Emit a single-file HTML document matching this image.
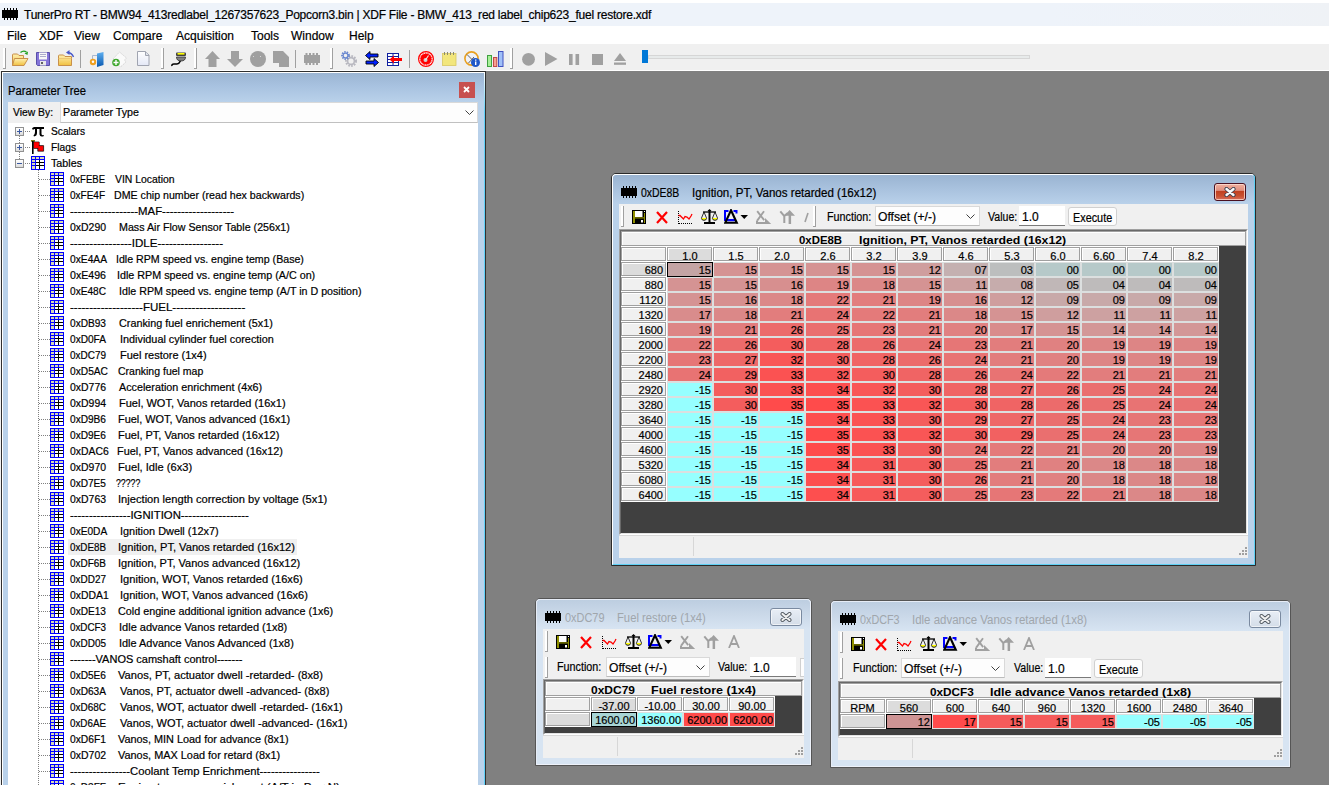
<!DOCTYPE html><html><head><meta charset="utf-8"><style>
html,body{margin:0;padding:0;}
body{width:1329px;height:785px;overflow:hidden;position:relative;background:#808080;font-family:"Liberation Sans",sans-serif;}
div{box-sizing:border-box;}
.t{position:absolute;white-space:pre;line-height:14px;font-family:"Liberation Sans",sans-serif;-webkit-text-stroke:0.2px currentColor;}
svg{display:block;}
</style></head><body><div style="position:absolute;left:0px;top:0px;width:1329px;height:3px;background:#fff"></div><div style="position:absolute;left:0px;top:3px;width:1329px;height:23px;background:linear-gradient(90deg,#eef3fa 0px,#eef3fa 1050px,#eff2f6 1329px)"></div><svg style="position:absolute;left:2px;top:8px;shape-rendering:crispEdges" width="16" height="12" viewBox="0 0 16 12"><rect x="0" y="2" width="16" height="8" fill="#000"/><rect x="1.5" y="0" width="1.6" height="2" fill="#000"/><rect x="1.5" y="10" width="1.6" height="2" fill="#000"/><rect x="4.5" y="0" width="1.6" height="2" fill="#000"/><rect x="4.5" y="10" width="1.6" height="2" fill="#000"/><rect x="7.5" y="0" width="1.6" height="2" fill="#000"/><rect x="7.5" y="10" width="1.6" height="2" fill="#000"/><rect x="10.5" y="0" width="1.6" height="2" fill="#000"/><rect x="10.5" y="10" width="1.6" height="2" fill="#000"/><rect x="13.5" y="0" width="1.6" height="2" fill="#000"/><rect x="13.5" y="10" width="1.6" height="2" fill="#000"/></svg><div class="t" style="left:24px;top:7px;font-size:12px;color:#000;font-weight:400;line-height:16px;letter-spacing:-0.23px;">TunerPro RT - BMW94_413redlabel_1267357623_Popcorn3.bin | XDF File - BMW_413_red label_chip623_fuel restore.xdf</div><div style="position:absolute;left:0px;top:26px;width:1329px;height:18px;background:#fff"></div><div class="t" style="left:7px;top:29px;font-size:12px;color:#000;font-weight:400;line-height:14px;">File</div><div class="t" style="left:39px;top:29px;font-size:12px;color:#000;font-weight:400;line-height:14px;">XDF</div><div class="t" style="left:74px;top:29px;font-size:12px;color:#000;font-weight:400;line-height:14px;">View</div><div class="t" style="left:113px;top:29px;font-size:12px;color:#000;font-weight:400;line-height:14px;">Compare</div><div class="t" style="left:176px;top:29px;font-size:12px;color:#000;font-weight:400;line-height:14px;">Acquisition</div><div class="t" style="left:251px;top:29px;font-size:12px;color:#000;font-weight:400;line-height:14px;">Tools</div><div class="t" style="left:291px;top:29px;font-size:12px;color:#000;font-weight:400;line-height:14px;">Window</div><div class="t" style="left:349px;top:29px;font-size:12px;color:#000;font-weight:400;line-height:14px;">Help</div><div style="position:absolute;left:0px;top:44px;width:1329px;height:26px;background:#f0f0f0"></div><div style="position:absolute;left:0px;top:70px;width:1329px;height:1px;background:#fff"></div><div style="position:absolute;left:3px;top:48px;width:2px;height:20px;background:#fff"></div><div style="position:absolute;left:5px;top:48px;width:1px;height:20px;background:#a0a0a0"></div><div style="position:absolute;left:3px;top:68px;width:3px;height:1px;background:#a0a0a0"></div><div style="position:absolute;left:80px;top:50px;width:1px;height:18px;background:#a0a0a0"></div><div style="position:absolute;left:161px;top:48px;width:2px;height:20px;background:#fff"></div><div style="position:absolute;left:163px;top:48px;width:1px;height:20px;background:#a0a0a0"></div><div style="position:absolute;left:161px;top:68px;width:3px;height:1px;background:#a0a0a0"></div><div style="position:absolute;left:194px;top:48px;width:2px;height:20px;background:#fff"></div><div style="position:absolute;left:196px;top:48px;width:1px;height:20px;background:#a0a0a0"></div><div style="position:absolute;left:194px;top:68px;width:3px;height:1px;background:#a0a0a0"></div><div style="position:absolute;left:295px;top:50px;width:1px;height:18px;background:#a0a0a0"></div><div style="position:absolute;left:330px;top:48px;width:2px;height:20px;background:#fff"></div><div style="position:absolute;left:332px;top:48px;width:1px;height:20px;background:#a0a0a0"></div><div style="position:absolute;left:330px;top:68px;width:3px;height:1px;background:#a0a0a0"></div><div style="position:absolute;left:409px;top:50px;width:1px;height:18px;background:#a0a0a0"></div><div style="position:absolute;left:510px;top:48px;width:2px;height:20px;background:#fff"></div><div style="position:absolute;left:512px;top:48px;width:1px;height:20px;background:#a0a0a0"></div><div style="position:absolute;left:510px;top:68px;width:3px;height:1px;background:#a0a0a0"></div><svg style="position:absolute;left:0;top:44px" width="660" height="27" viewBox="0 44 660 27">
<defs>
<linearGradient id="gfold" x1="0" y1="0" x2="0" y2="1"><stop offset="0" stop-color="#fff0b0"/><stop offset="1" stop-color="#f0c040"/></linearGradient>
<linearGradient id="gdoor" x1="0" y1="0" x2="0" y2="1"><stop offset="0" stop-color="#60b0f0"/><stop offset="1" stop-color="#0858b0"/></linearGradient>
<linearGradient id="gpage" x1="0" y1="0" x2="0" y2="1"><stop offset="0" stop-color="#fff"/><stop offset="1" stop-color="#e4e8f6"/></linearGradient>
</defs>
<!-- open folder w/ green arrow -->
<path d="M12.5 65.5 V55 Q12.5 54 13.5 54 H17.5 L19 55.5 H23.5 V58" fill="url(#gfold)" stroke="#c8904a"/>
<path d="M14.5 58.5 H28 L24 65.5 H12.5z" fill="url(#gfold)" stroke="#c8904a"/>
<path d="M20.5 52.5 Q23.5 50 26.5 52" fill="none" stroke="#20a020" stroke-width="1.4"/>
<path d="M24.5 53.5 L28 51.5 L27.5 55z" fill="#20a020"/>
<!-- floppy purple -->
<path d="M36.5 52.5 H49.5 V65.5 H37.5 L36.5 64.5z" fill="#8474d8" stroke="#5850a8"/>
<rect x="39" y="52.5" width="8" height="7" fill="#f8f8f8"/>
<path d="M40 54.5h6M40 56.5h6" stroke="#9898c0" stroke-width="0.8"/>
<rect x="40" y="61" width="6" height="4.5" fill="#e8e8e8"/>
<rect x="41" y="62" width="2" height="2" fill="#606060"/>
<!-- folder w/ blue arrow -->
<path d="M58.5 65.5 V56 Q58.5 55 59.5 55 H63.5 L65 56.5 H71.5 V65.5z" fill="url(#gfold)" stroke="#c8904a"/>
<path d="M58.5 58.5 H71.5" stroke="#e8c070" stroke-width="0.8"/>
<path d="M73.5 57 Q72 53 68 52.5" fill="none" stroke="#4858c8" stroke-width="1.4"/>
<path d="M66 52.5 L69.5 50 L69.5 55z" fill="#4858c8"/>
<!-- door -->
<path d="M97 53.5 L103.5 52 V65 L97 67z" fill="url(#gdoor)"/>
<path d="M92.5 62 V55.5 H97" fill="none" stroke="#a8b8d0" stroke-width="1"/>
<circle cx="93" cy="62" r="3.2" fill="#f0a020"/>
<circle cx="93" cy="61.7" r="1.2" fill="#fff"/>
<!-- plug-ish -->
<path d="M119.5 52 L126.5 58 L124.5 60 L126 62 L120.5 67 L113 59z" fill="#fafafa" stroke="#c8c8c8" stroke-width="0.8" stroke-dasharray="1.5 1"/>
<circle cx="116" cy="62.5" r="3.8" fill="#40a830"/>
<path d="M113.5 62.5h5M116 60v5" stroke="#fff" stroke-width="1.4"/>
<!-- page -->
<path d="M137.5 51.5 H145.5 L149 55 V65.5 H137.5z" fill="url(#gpage)" stroke="#a0a4b0"/>
<path d="M145.5 51.5 V55.5 H149" fill="#e0e4ec" stroke="#a0a4b0"/>
<!-- connection plug -->
<path d="M172 66 Q171.5 64 174 64 H177 Q179 64 180 61.5 L181 59" fill="none" stroke="#000" stroke-width="1.6"/>
<path d="M176.5 57 Q176.5 61 181 61 Q185.5 61 185.5 57z" fill="#808080" stroke="#303030" stroke-width="0.8"/>
<rect x="176" y="52.5" width="10" height="3.5" rx="1" fill="#404040"/>
<rect x="177.5" y="53" width="7" height="1.6" fill="#ffff00"/>
<!-- grey up/down/circle/pages -->
<path d="M212.5 51 L220 59 H216.5 V67 H208.5 V59 H205z" fill="#a0a0a0"/>
<path d="M235 67 L243 59 H239 V51 H231 V59 H227z" fill="#a0a0a0"/>
<circle cx="258" cy="59" r="8" fill="#a0a0a0"/>
<rect x="253" y="56" width="1" height="1" fill="#d8d8d8"/><rect x="260" y="56" width="1" height="1" fill="#d8d8d8"/>
<path d="M273 51 H283 L289 57 V67 H279 V63 H273z" fill="#a0a0a0"/>
<!-- grey chip -->
<rect x="304" y="55" width="16" height="8" fill="#a0a0a0"/>
<g fill="#a0a0a0"><rect x="305.5" y="53" width="2" height="2"/><rect x="309" y="53" width="2" height="2"/><rect x="312.5" y="53" width="2" height="2"/><rect x="316" y="53" width="2" height="2"/><rect x="305.5" y="63" width="2" height="2"/><rect x="309" y="63" width="2" height="2"/><rect x="312.5" y="63" width="2" height="2"/><rect x="316" y="63" width="2" height="2"/></g>
<!-- gears -->
<circle cx="351" cy="61" r="4.8" fill="none" stroke="#b8b8c0" stroke-width="2.4" stroke-dasharray="1.6 1.2"/>
<circle cx="351" cy="61" r="3.4" fill="none" stroke="#b8b8c0" stroke-width="1.6"/>
<circle cx="345.5" cy="55.5" r="3.4" fill="none" stroke="#6a88d0" stroke-width="2" stroke-dasharray="1.4 1"/>
<circle cx="345.5" cy="55.5" r="2.4" fill="none" stroke="#6a88d0" stroke-width="1.2"/>
<!-- arrows -->
<path d="M365.5 55.5 L370 51.5 V54 H378 V57 H370 V59.5z" fill="#0020ff" stroke="#000" stroke-width="0.9"/>
<path d="M378.5 62.5 L374 58.5 V61 H366 V64 H374 V66.5z" fill="#0020ff" stroke="#000" stroke-width="0.9"/>
<!-- table w/ red arrow -->
<rect x="387.5" y="53.5" width="11" height="12" fill="#fff" stroke="#1020a0"/>
<path d="M393 53.5 V65.5 M387.5 56.5 H398.5 M387.5 59.5 H398.5 M387.5 62.5 H398.5" stroke="#1020a0" stroke-width="1"/>
<path d="M389.5 59.5 L394 55.5 V58 H402 V61 H394 V63.5z" fill="#ff0000"/>
<!-- red gauge -->
<circle cx="426" cy="59" r="7.4" fill="#fff" stroke="#ff0000" stroke-width="1.2"/>
<circle cx="426" cy="59" r="5.6" fill="#ff0000"/>
<circle cx="426" cy="59" r="5.9" fill="none" stroke="#ff0000" stroke-width="1" stroke-dasharray="1.2 1.4"/>
<circle cx="425.5" cy="60" r="2" fill="#d0d0d0"/>
<path d="M425.5 60 L428.5 55.5" stroke="#f0f0f0" stroke-width="1.1"/>
<!-- notepad -->
<rect x="442.5" y="53.5" width="13.5" height="12" fill="#f2e67c" stroke="#d8c860" stroke-width="0.8"/>
<g fill="#8a8a70"><rect x="444" y="52" width="1" height="3"/><rect x="447" y="52" width="1" height="3"/><rect x="450" y="52" width="1" height="3"/><rect x="453" y="52" width="1" height="3"/></g>
<!-- clock w/ info -->
<circle cx="471.5" cy="58.5" r="6.6" fill="#f0f2f8" stroke="#e8a020" stroke-width="1.6"/>
<path d="M467 54.5 L472 59.5 M474 57 L468.5 63" stroke="#505050" stroke-width="0.9"/>
<circle cx="475.5" cy="62.5" r="4.5" fill="#2058c8"/>
<rect x="475" y="61.5" width="1.4" height="3.5" fill="#fff"/><rect x="475" y="59.5" width="1.4" height="1.2" fill="#fff"/>
<!-- bars -->
<rect x="487.5" y="55.5" width="4" height="11" fill="#a8f098" stroke="#40a040"/>
<rect x="493.5" y="57.5" width="3.3" height="9" fill="#f8a090" stroke="#c04848"/>
<rect x="498.5" y="51.5" width="4.5" height="15" fill="#a0c0f8" stroke="#4050c0"/>
<!-- media -->
<circle cx="528.5" cy="59.3" r="6.4" fill="#a0a0a0"/>
<path d="M545 52 L557.5 59 L545 66z" fill="#a0a0a0"/>
<rect x="569" y="54" width="3.6" height="11" fill="#a0a0a0"/><rect x="575.5" y="54" width="3.6" height="11" fill="#a0a0a0"/>
<rect x="592" y="54" width="11" height="11" fill="#a0a0a0"/>
<path d="M620 53 L626 61 H614z" fill="#a0a0a0"/><rect x="614" y="62.5" width="12" height="2.3" fill="#a0a0a0"/>
</svg><div style="position:absolute;left:648px;top:55px;width:382px;height:4px;background:#e7eaea;border:1px solid #d6d6d6"></div><div style="position:absolute;left:642px;top:50px;width:6px;height:13px;background:#0078d7"></div><div style="position:absolute;left:486px;top:71px;width:843px;height:714px;background:#808080"></div><div style="position:absolute;left:0px;top:71px;width:1px;height:714px;background:#f0f0f0"></div><div style="position:absolute;left:1px;top:71px;width:485px;height:714px;background:#303030"></div><div style="position:absolute;left:2px;top:72px;width:483px;height:713px;background:linear-gradient(#9ab4d2 0px,#a8c2e0 14px,#b9d1ea 30px,#b9d1ea 100%)"></div><div style="position:absolute;left:2px;top:72px;width:482px;height:1px;background:#fff"></div><div style="position:absolute;left:2px;top:72px;width:1px;height:713px;background:#fff"></div><div style="position:absolute;left:484px;top:72px;width:1px;height:713px;background:linear-gradient(#fff 0px,#60d0f8 40px,#60d0f8 100%)"></div><div class="t" style="left:8px;top:84px;font-size:12px;color:#000;font-weight:400;;transform-origin:0 0;transform:scaleX(0.9355);">Parameter Tree</div><div style="position:absolute;left:459px;top:82px;width:16px;height:16px;background:#c75050"></div><svg style="position:absolute;left:463px;top:86px;" width="7" height="7" viewBox="0 0 7 7"><path d="M1 1l5 5M6 1l-5 5" stroke="#fff" stroke-width="1.8"/></svg><div style="position:absolute;left:8px;top:102px;width:52px;height:21px;background:#f0f0f0"></div><div class="t" style="left:13px;top:105px;font-size:11px;color:#000;font-weight:400;;transform-origin:0 0;transform:scaleX(0.9391);">View By:</div><div style="position:absolute;left:60px;top:102px;width:418px;height:21px;background:#fdfdfd;border:1px solid #d9d9d9;border-bottom-color:#c0c0c0"></div><div class="t" style="left:62.5px;top:105px;font-size:11px;color:#000;font-weight:400;;transform-origin:0 0;transform:scaleX(0.9736);">Parameter Type</div><svg style="position:absolute;left:465px;top:110px;" width="9" height="6" viewBox="0 0 9 6"><path d="M0.5 0.5l4 4 4-4" fill="none" stroke="#404040" stroke-width="1"/></svg><div style="position:absolute;left:8px;top:123px;width:470px;height:662px;background:#fff"></div><div style="position:absolute;left:19px;top:136px;width:1px;height:24px;background-image:linear-gradient(#808080 50%,transparent 50%);background-size:1px 2px"></div><div style="position:absolute;left:15px;top:127px;width:9px;height:9px;background:linear-gradient(#fff,#dcdcdc);border:1px solid #919191"></div><div style="position:absolute;left:17px;top:131px;width:5px;height:1px;background:#3a58a0"></div><div style="position:absolute;left:19px;top:129px;width:1px;height:5px;background:#3a58a0"></div><div style="position:absolute;left:25px;top:131px;width:6px;height:1px;background-image:linear-gradient(90deg,#808080 50%,transparent 50%);background-size:2px 1px"></div><div class="t" style="left:50.5px;top:124px;font-size:11px;color:#000;font-weight:400;;transform-origin:0 0;transform:scaleX(0.9267);">Scalars</div><div style="position:absolute;left:15px;top:143px;width:9px;height:9px;background:linear-gradient(#fff,#dcdcdc);border:1px solid #919191"></div><div style="position:absolute;left:17px;top:147px;width:5px;height:1px;background:#3a58a0"></div><div style="position:absolute;left:19px;top:145px;width:1px;height:5px;background:#3a58a0"></div><div style="position:absolute;left:25px;top:147px;width:6px;height:1px;background-image:linear-gradient(90deg,#808080 50%,transparent 50%);background-size:2px 1px"></div><div class="t" style="left:50.5px;top:140px;font-size:11px;color:#000;font-weight:400;;transform-origin:0 0;transform:scaleX(0.9292);">Flags</div><div style="position:absolute;left:15px;top:159px;width:9px;height:9px;background:linear-gradient(#fff,#dcdcdc);border:1px solid #919191"></div><div style="position:absolute;left:17px;top:163px;width:5px;height:1px;background:#3a58a0"></div><div style="position:absolute;left:25px;top:163px;width:6px;height:1px;background-image:linear-gradient(90deg,#808080 50%,transparent 50%);background-size:2px 1px"></div><div class="t" style="left:50.5px;top:156px;font-size:11px;color:#000;font-weight:400;;transform-origin:0 0;transform:scaleX(0.9749);">Tables</div><svg style="position:absolute;left:31px;top:126px;" width="14" height="11" viewBox="0 0 14 11"><path d="M1 2.5 Q2 0.5 4 1 H13 V3 H10.5 V8 Q10.5 9.5 12.5 9 L13 10 Q9 11.5 8.5 8.5 V3 H6 V7 Q6 10 3 10.5 L2.5 9.5 Q4 8 4 6 V3 Q2.5 3 2 4z" fill="#000"/></svg><svg style="position:absolute;left:31px;top:139px;" width="14" height="15" viewBox="0 0 14 15"><rect x="0" y="1" width="4" height="1.8" fill="#808020"/><rect x="1" y="2" width="1.6" height="13" fill="#000"/><path d="M2.6 3H8.2V9.4H2.6z" fill="#ff0000" stroke="#000" stroke-width="0.7"/><path d="M6.8 6.6H12.6V12.2H6.8z" fill="#ff0000" stroke="#000" stroke-width="0.7"/><path d="M3 3.4H7.8V9H3z" fill="#ff0000"/></svg><svg style="position:absolute;left:31px;top:156px;shape-rendering:crispEdges" width="14" height="14" viewBox="0 0 14 14"><rect x="0" y="0" width="14" height="14" fill="#0000ff"/><rect x="1" y="1" width="3" height="2" fill="#d8d8b8"/><rect x="5" y="1" width="3" height="2" fill="#d8d8b8"/><rect x="9" y="1" width="4" height="2" fill="#d8d8b8"/><rect x="1" y="4" width="3" height="2" fill="#d8d8b8"/><rect x="1" y="7" width="3" height="2" fill="#d8d8b8"/><rect x="1" y="10" width="3" height="3" fill="#d8d8b8"/><rect x="5" y="4" width="8" height="9" fill="#fff"/><rect x="8" y="4" width="1" height="9" fill="#000"/><rect x="5" y="6" width="8" height="1" fill="#000"/><rect x="5" y="9" width="8" height="1" fill="#000"/></svg><div style="position:absolute;left:38px;top:170px;width:1px;height:615px;background-image:linear-gradient(#808080 50%,transparent 50%);background-size:1px 2px"></div><div style="position:absolute;left:39px;top:179px;width:11px;height:1px;background-image:linear-gradient(90deg,#808080 50%,transparent 50%);background-size:2px 1px"></div><svg style="position:absolute;left:50px;top:172px;shape-rendering:crispEdges" width="14" height="14" viewBox="0 0 14 14"><rect x="0" y="0" width="14" height="14" fill="#0000ff"/><rect x="1" y="1" width="3" height="2" fill="#d8d8b8"/><rect x="5" y="1" width="3" height="2" fill="#d8d8b8"/><rect x="9" y="1" width="4" height="2" fill="#d8d8b8"/><rect x="1" y="4" width="3" height="2" fill="#d8d8b8"/><rect x="1" y="7" width="3" height="2" fill="#d8d8b8"/><rect x="1" y="10" width="3" height="3" fill="#d8d8b8"/><rect x="5" y="4" width="8" height="9" fill="#fff"/><rect x="8" y="4" width="1" height="9" fill="#000"/><rect x="5" y="6" width="8" height="1" fill="#000"/><rect x="5" y="9" width="8" height="1" fill="#000"/></svg><div class="t" style="left:70px;top:172px;font-size:11px;color:#000;font-weight:400;;transform-origin:0 0;transform:scaleX(0.8672);">0xFEBE</div><div class="t" style="left:114.7px;top:172px;font-size:11px;color:#000;font-weight:400;;transform-origin:0 0;transform:scaleX(0.9463);">VIN Location</div><div style="position:absolute;left:39px;top:195px;width:11px;height:1px;background-image:linear-gradient(90deg,#808080 50%,transparent 50%);background-size:2px 1px"></div><svg style="position:absolute;left:50px;top:188px;shape-rendering:crispEdges" width="14" height="14" viewBox="0 0 14 14"><rect x="0" y="0" width="14" height="14" fill="#0000ff"/><rect x="1" y="1" width="3" height="2" fill="#d8d8b8"/><rect x="5" y="1" width="3" height="2" fill="#d8d8b8"/><rect x="9" y="1" width="4" height="2" fill="#d8d8b8"/><rect x="1" y="4" width="3" height="2" fill="#d8d8b8"/><rect x="1" y="7" width="3" height="2" fill="#d8d8b8"/><rect x="1" y="10" width="3" height="3" fill="#d8d8b8"/><rect x="5" y="4" width="8" height="9" fill="#fff"/><rect x="8" y="4" width="1" height="9" fill="#000"/><rect x="5" y="6" width="8" height="1" fill="#000"/><rect x="5" y="9" width="8" height="1" fill="#000"/></svg><div class="t" style="left:70px;top:188px;font-size:11px;color:#000;font-weight:400;;transform-origin:0 0;transform:scaleX(0.9087);">0xFE4F</div><div class="t" style="left:114px;top:188px;font-size:11px;color:#000;font-weight:400;;transform-origin:0 0;transform:scaleX(0.9662);">DME chip number (read hex backwards)</div><div style="position:absolute;left:39px;top:211px;width:11px;height:1px;background-image:linear-gradient(90deg,#808080 50%,transparent 50%);background-size:2px 1px"></div><svg style="position:absolute;left:50px;top:204px;shape-rendering:crispEdges" width="14" height="14" viewBox="0 0 14 14"><rect x="0" y="0" width="14" height="14" fill="#0000ff"/><rect x="1" y="1" width="3" height="2" fill="#d8d8b8"/><rect x="5" y="1" width="3" height="2" fill="#d8d8b8"/><rect x="9" y="1" width="4" height="2" fill="#d8d8b8"/><rect x="1" y="4" width="3" height="2" fill="#d8d8b8"/><rect x="1" y="7" width="3" height="2" fill="#d8d8b8"/><rect x="1" y="10" width="3" height="3" fill="#d8d8b8"/><rect x="5" y="4" width="8" height="9" fill="#fff"/><rect x="8" y="4" width="1" height="9" fill="#000"/><rect x="5" y="6" width="8" height="1" fill="#000"/><rect x="5" y="9" width="8" height="1" fill="#000"/></svg><div class="t" style="left:70px;top:204px;font-size:11px;color:#000;font-weight:400;;transform-origin:0 0;transform:scaleX(1.0330);">------------------MAF-------------------</div><div style="position:absolute;left:39px;top:227px;width:11px;height:1px;background-image:linear-gradient(90deg,#808080 50%,transparent 50%);background-size:2px 1px"></div><svg style="position:absolute;left:50px;top:220px;shape-rendering:crispEdges" width="14" height="14" viewBox="0 0 14 14"><rect x="0" y="0" width="14" height="14" fill="#0000ff"/><rect x="1" y="1" width="3" height="2" fill="#d8d8b8"/><rect x="5" y="1" width="3" height="2" fill="#d8d8b8"/><rect x="9" y="1" width="4" height="2" fill="#d8d8b8"/><rect x="1" y="4" width="3" height="2" fill="#d8d8b8"/><rect x="1" y="7" width="3" height="2" fill="#d8d8b8"/><rect x="1" y="10" width="3" height="3" fill="#d8d8b8"/><rect x="5" y="4" width="8" height="9" fill="#fff"/><rect x="8" y="4" width="1" height="9" fill="#000"/><rect x="5" y="6" width="8" height="1" fill="#000"/><rect x="5" y="9" width="8" height="1" fill="#000"/></svg><div class="t" style="left:70px;top:220px;font-size:11px;color:#000;font-weight:400;;transform-origin:0 0;transform:scaleX(0.9493);">0xD290</div><div class="t" style="left:118.5px;top:220px;font-size:11px;color:#000;font-weight:400;;transform-origin:0 0;transform:scaleX(0.9711);">Mass Air Flow Sensor Table (256x1)</div><div style="position:absolute;left:39px;top:243px;width:11px;height:1px;background-image:linear-gradient(90deg,#808080 50%,transparent 50%);background-size:2px 1px"></div><svg style="position:absolute;left:50px;top:236px;shape-rendering:crispEdges" width="14" height="14" viewBox="0 0 14 14"><rect x="0" y="0" width="14" height="14" fill="#0000ff"/><rect x="1" y="1" width="3" height="2" fill="#d8d8b8"/><rect x="5" y="1" width="3" height="2" fill="#d8d8b8"/><rect x="9" y="1" width="4" height="2" fill="#d8d8b8"/><rect x="1" y="4" width="3" height="2" fill="#d8d8b8"/><rect x="1" y="7" width="3" height="2" fill="#d8d8b8"/><rect x="1" y="10" width="3" height="3" fill="#d8d8b8"/><rect x="5" y="4" width="8" height="9" fill="#fff"/><rect x="8" y="4" width="1" height="9" fill="#000"/><rect x="5" y="6" width="8" height="1" fill="#000"/><rect x="5" y="9" width="8" height="1" fill="#000"/></svg><div class="t" style="left:70px;top:236px;font-size:11px;color:#000;font-weight:400;;transform-origin:0 0;transform:scaleX(1.0527);">----------------IDLE-----------------</div><div style="position:absolute;left:39px;top:259px;width:11px;height:1px;background-image:linear-gradient(90deg,#808080 50%,transparent 50%);background-size:2px 1px"></div><svg style="position:absolute;left:50px;top:252px;shape-rendering:crispEdges" width="14" height="14" viewBox="0 0 14 14"><rect x="0" y="0" width="14" height="14" fill="#0000ff"/><rect x="1" y="1" width="3" height="2" fill="#d8d8b8"/><rect x="5" y="1" width="3" height="2" fill="#d8d8b8"/><rect x="9" y="1" width="4" height="2" fill="#d8d8b8"/><rect x="1" y="4" width="3" height="2" fill="#d8d8b8"/><rect x="1" y="7" width="3" height="2" fill="#d8d8b8"/><rect x="1" y="10" width="3" height="3" fill="#d8d8b8"/><rect x="5" y="4" width="8" height="9" fill="#fff"/><rect x="8" y="4" width="1" height="9" fill="#000"/><rect x="5" y="6" width="8" height="1" fill="#000"/><rect x="5" y="9" width="8" height="1" fill="#000"/></svg><div class="t" style="left:70px;top:252px;font-size:11px;color:#000;font-weight:400;;transform-origin:0 0;transform:scaleX(0.9308);">0xE4AA</div><div class="t" style="left:116.3px;top:252px;font-size:11px;color:#000;font-weight:400;;transform-origin:0 0;transform:scaleX(0.9664);">Idle RPM speed vs. engine temp (Base)</div><div style="position:absolute;left:39px;top:275px;width:11px;height:1px;background-image:linear-gradient(90deg,#808080 50%,transparent 50%);background-size:2px 1px"></div><svg style="position:absolute;left:50px;top:268px;shape-rendering:crispEdges" width="14" height="14" viewBox="0 0 14 14"><rect x="0" y="0" width="14" height="14" fill="#0000ff"/><rect x="1" y="1" width="3" height="2" fill="#d8d8b8"/><rect x="5" y="1" width="3" height="2" fill="#d8d8b8"/><rect x="9" y="1" width="4" height="2" fill="#d8d8b8"/><rect x="1" y="4" width="3" height="2" fill="#d8d8b8"/><rect x="1" y="7" width="3" height="2" fill="#d8d8b8"/><rect x="1" y="10" width="3" height="3" fill="#d8d8b8"/><rect x="5" y="4" width="8" height="9" fill="#fff"/><rect x="8" y="4" width="1" height="9" fill="#000"/><rect x="5" y="6" width="8" height="1" fill="#000"/><rect x="5" y="9" width="8" height="1" fill="#000"/></svg><div class="t" style="left:70px;top:268px;font-size:11px;color:#000;font-weight:400;;transform-origin:0 0;transform:scaleX(0.9648);">0xE496</div><div class="t" style="left:117.2px;top:268px;font-size:11px;color:#000;font-weight:400;;transform-origin:0 0;transform:scaleX(0.9764);">Idle RPM speed vs. engine temp (A/C on)</div><div style="position:absolute;left:39px;top:291px;width:11px;height:1px;background-image:linear-gradient(90deg,#808080 50%,transparent 50%);background-size:2px 1px"></div><svg style="position:absolute;left:50px;top:284px;shape-rendering:crispEdges" width="14" height="14" viewBox="0 0 14 14"><rect x="0" y="0" width="14" height="14" fill="#0000ff"/><rect x="1" y="1" width="3" height="2" fill="#d8d8b8"/><rect x="5" y="1" width="3" height="2" fill="#d8d8b8"/><rect x="9" y="1" width="4" height="2" fill="#d8d8b8"/><rect x="1" y="4" width="3" height="2" fill="#d8d8b8"/><rect x="1" y="7" width="3" height="2" fill="#d8d8b8"/><rect x="1" y="10" width="3" height="3" fill="#d8d8b8"/><rect x="5" y="4" width="8" height="9" fill="#fff"/><rect x="8" y="4" width="1" height="9" fill="#000"/><rect x="5" y="6" width="8" height="1" fill="#000"/><rect x="5" y="9" width="8" height="1" fill="#000"/></svg><div class="t" style="left:70px;top:284px;font-size:11px;color:#000;font-weight:400;;transform-origin:0 0;transform:scaleX(0.9198);">0xE48C</div><div class="t" style="left:118.5px;top:284px;font-size:11px;color:#000;font-weight:400;;transform-origin:0 0;transform:scaleX(0.9705);">Idle RPM speed vs. engine temp (A/T in D position)</div><div style="position:absolute;left:39px;top:307px;width:11px;height:1px;background-image:linear-gradient(90deg,#808080 50%,transparent 50%);background-size:2px 1px"></div><svg style="position:absolute;left:50px;top:300px;shape-rendering:crispEdges" width="14" height="14" viewBox="0 0 14 14"><rect x="0" y="0" width="14" height="14" fill="#0000ff"/><rect x="1" y="1" width="3" height="2" fill="#d8d8b8"/><rect x="5" y="1" width="3" height="2" fill="#d8d8b8"/><rect x="9" y="1" width="4" height="2" fill="#d8d8b8"/><rect x="1" y="4" width="3" height="2" fill="#d8d8b8"/><rect x="1" y="7" width="3" height="2" fill="#d8d8b8"/><rect x="1" y="10" width="3" height="3" fill="#d8d8b8"/><rect x="5" y="4" width="8" height="9" fill="#fff"/><rect x="8" y="4" width="1" height="9" fill="#000"/><rect x="5" y="6" width="8" height="1" fill="#000"/><rect x="5" y="9" width="8" height="1" fill="#000"/></svg><div class="t" style="left:70px;top:300px;font-size:11px;color:#000;font-weight:400;;transform-origin:0 0;transform:scaleX(1.0476);">-------------------FUEL-------------------</div><div style="position:absolute;left:39px;top:323px;width:11px;height:1px;background-image:linear-gradient(90deg,#808080 50%,transparent 50%);background-size:2px 1px"></div><svg style="position:absolute;left:50px;top:316px;shape-rendering:crispEdges" width="14" height="14" viewBox="0 0 14 14"><rect x="0" y="0" width="14" height="14" fill="#0000ff"/><rect x="1" y="1" width="3" height="2" fill="#d8d8b8"/><rect x="5" y="1" width="3" height="2" fill="#d8d8b8"/><rect x="9" y="1" width="4" height="2" fill="#d8d8b8"/><rect x="1" y="4" width="3" height="2" fill="#d8d8b8"/><rect x="1" y="7" width="3" height="2" fill="#d8d8b8"/><rect x="1" y="10" width="3" height="3" fill="#d8d8b8"/><rect x="5" y="4" width="8" height="9" fill="#fff"/><rect x="8" y="4" width="1" height="9" fill="#000"/><rect x="5" y="6" width="8" height="1" fill="#000"/><rect x="5" y="9" width="8" height="1" fill="#000"/></svg><div class="t" style="left:70px;top:316px;font-size:11px;color:#000;font-weight:400;;transform-origin:0 0;transform:scaleX(0.9198);">0xDB93</div><div class="t" style="left:118.5px;top:316px;font-size:11px;color:#000;font-weight:400;;transform-origin:0 0;transform:scaleX(0.9832);">Cranking fuel enrichement (5x1)</div><div style="position:absolute;left:39px;top:339px;width:11px;height:1px;background-image:linear-gradient(90deg,#808080 50%,transparent 50%);background-size:2px 1px"></div><svg style="position:absolute;left:50px;top:332px;shape-rendering:crispEdges" width="14" height="14" viewBox="0 0 14 14"><rect x="0" y="0" width="14" height="14" fill="#0000ff"/><rect x="1" y="1" width="3" height="2" fill="#d8d8b8"/><rect x="5" y="1" width="3" height="2" fill="#d8d8b8"/><rect x="9" y="1" width="4" height="2" fill="#d8d8b8"/><rect x="1" y="4" width="3" height="2" fill="#d8d8b8"/><rect x="1" y="7" width="3" height="2" fill="#d8d8b8"/><rect x="1" y="10" width="3" height="3" fill="#d8d8b8"/><rect x="5" y="4" width="8" height="9" fill="#fff"/><rect x="8" y="4" width="1" height="9" fill="#000"/><rect x="5" y="6" width="8" height="1" fill="#000"/><rect x="5" y="9" width="8" height="1" fill="#000"/></svg><div class="t" style="left:70px;top:332px;font-size:11px;color:#000;font-weight:400;;transform-origin:0 0;transform:scaleX(0.9198);">0xD0FA</div><div class="t" style="left:119.5px;top:332px;font-size:11px;color:#000;font-weight:400;;transform-origin:0 0;transform:scaleX(0.9864);">Individual cylinder fuel corection</div><div style="position:absolute;left:39px;top:355px;width:11px;height:1px;background-image:linear-gradient(90deg,#808080 50%,transparent 50%);background-size:2px 1px"></div><svg style="position:absolute;left:50px;top:348px;shape-rendering:crispEdges" width="14" height="14" viewBox="0 0 14 14"><rect x="0" y="0" width="14" height="14" fill="#0000ff"/><rect x="1" y="1" width="3" height="2" fill="#d8d8b8"/><rect x="5" y="1" width="3" height="2" fill="#d8d8b8"/><rect x="9" y="1" width="4" height="2" fill="#d8d8b8"/><rect x="1" y="4" width="3" height="2" fill="#d8d8b8"/><rect x="1" y="7" width="3" height="2" fill="#d8d8b8"/><rect x="1" y="10" width="3" height="3" fill="#d8d8b8"/><rect x="5" y="4" width="8" height="9" fill="#fff"/><rect x="8" y="4" width="1" height="9" fill="#000"/><rect x="5" y="6" width="8" height="1" fill="#000"/><rect x="5" y="9" width="8" height="1" fill="#000"/></svg><div class="t" style="left:70px;top:348px;font-size:11px;color:#000;font-weight:400;;transform-origin:0 0;transform:scaleX(0.9057);">0xDC79</div><div class="t" style="left:119.5px;top:348px;font-size:11px;color:#000;font-weight:400;;transform-origin:0 0;transform:scaleX(0.9976);">Fuel restore (1x4)</div><div style="position:absolute;left:39px;top:371px;width:11px;height:1px;background-image:linear-gradient(90deg,#808080 50%,transparent 50%);background-size:2px 1px"></div><svg style="position:absolute;left:50px;top:364px;shape-rendering:crispEdges" width="14" height="14" viewBox="0 0 14 14"><rect x="0" y="0" width="14" height="14" fill="#0000ff"/><rect x="1" y="1" width="3" height="2" fill="#d8d8b8"/><rect x="5" y="1" width="3" height="2" fill="#d8d8b8"/><rect x="9" y="1" width="4" height="2" fill="#d8d8b8"/><rect x="1" y="4" width="3" height="2" fill="#d8d8b8"/><rect x="1" y="7" width="3" height="2" fill="#d8d8b8"/><rect x="1" y="10" width="3" height="3" fill="#d8d8b8"/><rect x="5" y="4" width="8" height="9" fill="#fff"/><rect x="8" y="4" width="1" height="9" fill="#000"/><rect x="5" y="6" width="8" height="1" fill="#000"/><rect x="5" y="9" width="8" height="1" fill="#000"/></svg><div class="t" style="left:70px;top:364px;font-size:11px;color:#000;font-weight:400;;transform-origin:0 0;transform:scaleX(0.9275);">0xD5AC</div><div class="t" style="left:117.9px;top:364px;font-size:11px;color:#000;font-weight:400;;transform-origin:0 0;transform:scaleX(0.9554);">Cranking fuel map</div><div style="position:absolute;left:39px;top:387px;width:11px;height:1px;background-image:linear-gradient(90deg,#808080 50%,transparent 50%);background-size:2px 1px"></div><svg style="position:absolute;left:50px;top:380px;shape-rendering:crispEdges" width="14" height="14" viewBox="0 0 14 14"><rect x="0" y="0" width="14" height="14" fill="#0000ff"/><rect x="1" y="1" width="3" height="2" fill="#d8d8b8"/><rect x="5" y="1" width="3" height="2" fill="#d8d8b8"/><rect x="9" y="1" width="4" height="2" fill="#d8d8b8"/><rect x="1" y="4" width="3" height="2" fill="#d8d8b8"/><rect x="1" y="7" width="3" height="2" fill="#d8d8b8"/><rect x="1" y="10" width="3" height="3" fill="#d8d8b8"/><rect x="5" y="4" width="8" height="9" fill="#fff"/><rect x="8" y="4" width="1" height="9" fill="#000"/><rect x="5" y="6" width="8" height="1" fill="#000"/><rect x="5" y="9" width="8" height="1" fill="#000"/></svg><div class="t" style="left:70px;top:380px;font-size:11px;color:#000;font-weight:400;;transform-origin:0 0;transform:scaleX(0.9493);">0xD776</div><div class="t" style="left:118.8px;top:380px;font-size:11px;color:#000;font-weight:400;;transform-origin:0 0;transform:scaleX(0.9793);">Acceleration enrichment (4x6)</div><div style="position:absolute;left:39px;top:403px;width:11px;height:1px;background-image:linear-gradient(90deg,#808080 50%,transparent 50%);background-size:2px 1px"></div><svg style="position:absolute;left:50px;top:396px;shape-rendering:crispEdges" width="14" height="14" viewBox="0 0 14 14"><rect x="0" y="0" width="14" height="14" fill="#0000ff"/><rect x="1" y="1" width="3" height="2" fill="#d8d8b8"/><rect x="5" y="1" width="3" height="2" fill="#d8d8b8"/><rect x="9" y="1" width="4" height="2" fill="#d8d8b8"/><rect x="1" y="4" width="3" height="2" fill="#d8d8b8"/><rect x="1" y="7" width="3" height="2" fill="#d8d8b8"/><rect x="1" y="10" width="3" height="3" fill="#d8d8b8"/><rect x="5" y="4" width="8" height="9" fill="#fff"/><rect x="8" y="4" width="1" height="9" fill="#000"/><rect x="5" y="6" width="8" height="1" fill="#000"/><rect x="5" y="9" width="8" height="1" fill="#000"/></svg><div class="t" style="left:70px;top:396px;font-size:11px;color:#000;font-weight:400;;transform-origin:0 0;transform:scaleX(0.9493);">0xD994</div><div class="t" style="left:118.5px;top:396px;font-size:11px;color:#000;font-weight:400;;transform-origin:0 0;transform:scaleX(0.9994);">Fuel, WOT, Vanos retarded (16x1)</div><div style="position:absolute;left:39px;top:419px;width:11px;height:1px;background-image:linear-gradient(90deg,#808080 50%,transparent 50%);background-size:2px 1px"></div><svg style="position:absolute;left:50px;top:412px;shape-rendering:crispEdges" width="14" height="14" viewBox="0 0 14 14"><rect x="0" y="0" width="14" height="14" fill="#0000ff"/><rect x="1" y="1" width="3" height="2" fill="#d8d8b8"/><rect x="5" y="1" width="3" height="2" fill="#d8d8b8"/><rect x="9" y="1" width="4" height="2" fill="#d8d8b8"/><rect x="1" y="4" width="3" height="2" fill="#d8d8b8"/><rect x="1" y="7" width="3" height="2" fill="#d8d8b8"/><rect x="1" y="10" width="3" height="3" fill="#d8d8b8"/><rect x="5" y="4" width="8" height="9" fill="#fff"/><rect x="8" y="4" width="1" height="9" fill="#000"/><rect x="5" y="6" width="8" height="1" fill="#000"/><rect x="5" y="9" width="8" height="1" fill="#000"/></svg><div class="t" style="left:70px;top:412px;font-size:11px;color:#000;font-weight:400;;transform-origin:0 0;transform:scaleX(0.9198);">0xD9B6</div><div class="t" style="left:118.1px;top:412px;font-size:11px;color:#000;font-weight:400;;transform-origin:0 0;transform:scaleX(0.9923);">Fuel, WOT, Vanos advanced (16x1)</div><div style="position:absolute;left:39px;top:435px;width:11px;height:1px;background-image:linear-gradient(90deg,#808080 50%,transparent 50%);background-size:2px 1px"></div><svg style="position:absolute;left:50px;top:428px;shape-rendering:crispEdges" width="14" height="14" viewBox="0 0 14 14"><rect x="0" y="0" width="14" height="14" fill="#0000ff"/><rect x="1" y="1" width="3" height="2" fill="#d8d8b8"/><rect x="5" y="1" width="3" height="2" fill="#d8d8b8"/><rect x="9" y="1" width="4" height="2" fill="#d8d8b8"/><rect x="1" y="4" width="3" height="2" fill="#d8d8b8"/><rect x="1" y="7" width="3" height="2" fill="#d8d8b8"/><rect x="1" y="10" width="3" height="3" fill="#d8d8b8"/><rect x="5" y="4" width="8" height="9" fill="#fff"/><rect x="8" y="4" width="1" height="9" fill="#000"/><rect x="5" y="6" width="8" height="1" fill="#000"/><rect x="5" y="9" width="8" height="1" fill="#000"/></svg><div class="t" style="left:70px;top:428px;font-size:11px;color:#000;font-weight:400;;transform-origin:0 0;transform:scaleX(0.9198);">0xD9E6</div><div class="t" style="left:118.1px;top:428px;font-size:11px;color:#000;font-weight:400;;transform-origin:0 0;transform:scaleX(1.0005);">Fuel, PT, Vanos retarded (16x12)</div><div style="position:absolute;left:39px;top:451px;width:11px;height:1px;background-image:linear-gradient(90deg,#808080 50%,transparent 50%);background-size:2px 1px"></div><svg style="position:absolute;left:50px;top:444px;shape-rendering:crispEdges" width="14" height="14" viewBox="0 0 14 14"><rect x="0" y="0" width="14" height="14" fill="#0000ff"/><rect x="1" y="1" width="3" height="2" fill="#d8d8b8"/><rect x="5" y="1" width="3" height="2" fill="#d8d8b8"/><rect x="9" y="1" width="4" height="2" fill="#d8d8b8"/><rect x="1" y="4" width="3" height="2" fill="#d8d8b8"/><rect x="1" y="7" width="3" height="2" fill="#d8d8b8"/><rect x="1" y="10" width="3" height="3" fill="#d8d8b8"/><rect x="5" y="4" width="8" height="9" fill="#fff"/><rect x="8" y="4" width="1" height="9" fill="#000"/><rect x="5" y="6" width="8" height="1" fill="#000"/><rect x="5" y="9" width="8" height="1" fill="#000"/></svg><div class="t" style="left:70px;top:444px;font-size:11px;color:#000;font-weight:400;;transform-origin:0 0;transform:scaleX(0.9446);">0xDAC6</div><div class="t" style="left:117.2px;top:444px;font-size:11px;color:#000;font-weight:400;;transform-origin:0 0;transform:scaleX(0.9878);">Fuel, PT, Vanos advanced (16x12)</div><div style="position:absolute;left:39px;top:467px;width:11px;height:1px;background-image:linear-gradient(90deg,#808080 50%,transparent 50%);background-size:2px 1px"></div><svg style="position:absolute;left:50px;top:460px;shape-rendering:crispEdges" width="14" height="14" viewBox="0 0 14 14"><rect x="0" y="0" width="14" height="14" fill="#0000ff"/><rect x="1" y="1" width="3" height="2" fill="#d8d8b8"/><rect x="5" y="1" width="3" height="2" fill="#d8d8b8"/><rect x="9" y="1" width="4" height="2" fill="#d8d8b8"/><rect x="1" y="4" width="3" height="2" fill="#d8d8b8"/><rect x="1" y="7" width="3" height="2" fill="#d8d8b8"/><rect x="1" y="10" width="3" height="3" fill="#d8d8b8"/><rect x="5" y="4" width="8" height="9" fill="#fff"/><rect x="8" y="4" width="1" height="9" fill="#000"/><rect x="5" y="6" width="8" height="1" fill="#000"/><rect x="5" y="9" width="8" height="1" fill="#000"/></svg><div class="t" style="left:70px;top:460px;font-size:11px;color:#000;font-weight:400;;transform-origin:0 0;transform:scaleX(0.9493);">0xD970</div><div class="t" style="left:118.1px;top:460px;font-size:11px;color:#000;font-weight:400;;transform-origin:0 0;transform:scaleX(1.0099);">Fuel, Idle (6x3)</div><div style="position:absolute;left:39px;top:483px;width:11px;height:1px;background-image:linear-gradient(90deg,#808080 50%,transparent 50%);background-size:2px 1px"></div><svg style="position:absolute;left:50px;top:476px;shape-rendering:crispEdges" width="14" height="14" viewBox="0 0 14 14"><rect x="0" y="0" width="14" height="14" fill="#0000ff"/><rect x="1" y="1" width="3" height="2" fill="#d8d8b8"/><rect x="5" y="1" width="3" height="2" fill="#d8d8b8"/><rect x="9" y="1" width="4" height="2" fill="#d8d8b8"/><rect x="1" y="4" width="3" height="2" fill="#d8d8b8"/><rect x="1" y="7" width="3" height="2" fill="#d8d8b8"/><rect x="1" y="10" width="3" height="3" fill="#d8d8b8"/><rect x="5" y="4" width="8" height="9" fill="#fff"/><rect x="8" y="4" width="1" height="9" fill="#000"/><rect x="5" y="6" width="8" height="1" fill="#000"/><rect x="5" y="9" width="8" height="1" fill="#000"/></svg><div class="t" style="left:70px;top:476px;font-size:11px;color:#000;font-weight:400;;transform-origin:0 0;transform:scaleX(0.9198);">0xD7E5</div><div class="t" style="left:115.8px;top:476px;font-size:11px;color:#000;font-weight:400;;transform-origin:0 0;transform:scaleX(0.7943);">?????</div><div style="position:absolute;left:39px;top:499px;width:11px;height:1px;background-image:linear-gradient(90deg,#808080 50%,transparent 50%);background-size:2px 1px"></div><svg style="position:absolute;left:50px;top:492px;shape-rendering:crispEdges" width="14" height="14" viewBox="0 0 14 14"><rect x="0" y="0" width="14" height="14" fill="#0000ff"/><rect x="1" y="1" width="3" height="2" fill="#d8d8b8"/><rect x="5" y="1" width="3" height="2" fill="#d8d8b8"/><rect x="9" y="1" width="4" height="2" fill="#d8d8b8"/><rect x="1" y="4" width="3" height="2" fill="#d8d8b8"/><rect x="1" y="7" width="3" height="2" fill="#d8d8b8"/><rect x="1" y="10" width="3" height="3" fill="#d8d8b8"/><rect x="5" y="4" width="8" height="9" fill="#fff"/><rect x="8" y="4" width="1" height="9" fill="#000"/><rect x="5" y="6" width="8" height="1" fill="#000"/><rect x="5" y="9" width="8" height="1" fill="#000"/></svg><div class="t" style="left:70px;top:492px;font-size:11px;color:#000;font-weight:400;;transform-origin:0 0;transform:scaleX(0.9493);">0xD763</div><div class="t" style="left:118.1px;top:492px;font-size:11px;color:#000;font-weight:400;;transform-origin:0 0;transform:scaleX(1.0127);">Injection length correction by voltage (5x1)</div><div style="position:absolute;left:39px;top:515px;width:11px;height:1px;background-image:linear-gradient(90deg,#808080 50%,transparent 50%);background-size:2px 1px"></div><svg style="position:absolute;left:50px;top:508px;shape-rendering:crispEdges" width="14" height="14" viewBox="0 0 14 14"><rect x="0" y="0" width="14" height="14" fill="#0000ff"/><rect x="1" y="1" width="3" height="2" fill="#d8d8b8"/><rect x="5" y="1" width="3" height="2" fill="#d8d8b8"/><rect x="9" y="1" width="4" height="2" fill="#d8d8b8"/><rect x="1" y="4" width="3" height="2" fill="#d8d8b8"/><rect x="1" y="7" width="3" height="2" fill="#d8d8b8"/><rect x="1" y="10" width="3" height="3" fill="#d8d8b8"/><rect x="5" y="4" width="8" height="9" fill="#fff"/><rect x="8" y="4" width="1" height="9" fill="#000"/><rect x="5" y="6" width="8" height="1" fill="#000"/><rect x="5" y="9" width="8" height="1" fill="#000"/></svg><div class="t" style="left:70px;top:508px;font-size:11px;color:#000;font-weight:400;;transform-origin:0 0;transform:scaleX(1.0309);">----------------IGNITION------------------</div><div style="position:absolute;left:39px;top:531px;width:11px;height:1px;background-image:linear-gradient(90deg,#808080 50%,transparent 50%);background-size:2px 1px"></div><svg style="position:absolute;left:50px;top:524px;shape-rendering:crispEdges" width="14" height="14" viewBox="0 0 14 14"><rect x="0" y="0" width="14" height="14" fill="#0000ff"/><rect x="1" y="1" width="3" height="2" fill="#d8d8b8"/><rect x="5" y="1" width="3" height="2" fill="#d8d8b8"/><rect x="9" y="1" width="4" height="2" fill="#d8d8b8"/><rect x="1" y="4" width="3" height="2" fill="#d8d8b8"/><rect x="1" y="7" width="3" height="2" fill="#d8d8b8"/><rect x="1" y="10" width="3" height="3" fill="#d8d8b8"/><rect x="5" y="4" width="8" height="9" fill="#fff"/><rect x="8" y="4" width="1" height="9" fill="#000"/><rect x="5" y="6" width="8" height="1" fill="#000"/><rect x="5" y="9" width="8" height="1" fill="#000"/></svg><div class="t" style="left:70px;top:524px;font-size:11px;color:#000;font-weight:400;;transform-origin:0 0;transform:scaleX(0.9217);">0xE0DA</div><div class="t" style="left:119.5px;top:524px;font-size:11px;color:#000;font-weight:400;;transform-origin:0 0;transform:scaleX(0.9904);">Ignition Dwell (12x7)</div><div style="position:absolute;left:39px;top:547px;width:11px;height:1px;background-image:linear-gradient(90deg,#808080 50%,transparent 50%);background-size:2px 1px"></div><svg style="position:absolute;left:50px;top:540px;shape-rendering:crispEdges" width="14" height="14" viewBox="0 0 14 14"><rect x="0" y="0" width="14" height="14" fill="#0000ff"/><rect x="1" y="1" width="3" height="2" fill="#d8d8b8"/><rect x="5" y="1" width="3" height="2" fill="#d8d8b8"/><rect x="9" y="1" width="4" height="2" fill="#d8d8b8"/><rect x="1" y="4" width="3" height="2" fill="#d8d8b8"/><rect x="1" y="7" width="3" height="2" fill="#d8d8b8"/><rect x="1" y="10" width="3" height="3" fill="#d8d8b8"/><rect x="5" y="4" width="8" height="9" fill="#fff"/><rect x="8" y="4" width="1" height="9" fill="#000"/><rect x="5" y="6" width="8" height="1" fill="#000"/><rect x="5" y="9" width="8" height="1" fill="#000"/></svg><div style="position:absolute;left:68px;top:539px;width:229px;height:16px;background:#f0f0f0"></div><div class="t" style="left:70px;top:540px;font-size:11px;color:#000;font-weight:400;;transform-origin:0 0;transform:scaleX(0.8920);">0xDE8B</div><div class="t" style="left:118.1px;top:540px;font-size:11px;color:#000;font-weight:400;;transform-origin:0 0;transform:scaleX(1.0097);">Ignition, PT, Vanos retarded (16x12)</div><div style="position:absolute;left:39px;top:563px;width:11px;height:1px;background-image:linear-gradient(90deg,#808080 50%,transparent 50%);background-size:2px 1px"></div><svg style="position:absolute;left:50px;top:556px;shape-rendering:crispEdges" width="14" height="14" viewBox="0 0 14 14"><rect x="0" y="0" width="14" height="14" fill="#0000ff"/><rect x="1" y="1" width="3" height="2" fill="#d8d8b8"/><rect x="5" y="1" width="3" height="2" fill="#d8d8b8"/><rect x="9" y="1" width="4" height="2" fill="#d8d8b8"/><rect x="1" y="4" width="3" height="2" fill="#d8d8b8"/><rect x="1" y="7" width="3" height="2" fill="#d8d8b8"/><rect x="1" y="10" width="3" height="3" fill="#d8d8b8"/><rect x="5" y="4" width="8" height="9" fill="#fff"/><rect x="8" y="4" width="1" height="9" fill="#000"/><rect x="5" y="6" width="8" height="1" fill="#000"/><rect x="5" y="9" width="8" height="1" fill="#000"/></svg><div class="t" style="left:70px;top:556px;font-size:11px;color:#000;font-weight:400;;transform-origin:0 0;transform:scaleX(0.9057);">0xDF6B</div><div class="t" style="left:118.1px;top:556px;font-size:11px;color:#000;font-weight:400;;transform-origin:0 0;transform:scaleX(1.0009);">Ignition, PT, Vanos advanced (16x12)</div><div style="position:absolute;left:39px;top:579px;width:11px;height:1px;background-image:linear-gradient(90deg,#808080 50%,transparent 50%);background-size:2px 1px"></div><svg style="position:absolute;left:50px;top:572px;shape-rendering:crispEdges" width="14" height="14" viewBox="0 0 14 14"><rect x="0" y="0" width="14" height="14" fill="#0000ff"/><rect x="1" y="1" width="3" height="2" fill="#d8d8b8"/><rect x="5" y="1" width="3" height="2" fill="#d8d8b8"/><rect x="9" y="1" width="4" height="2" fill="#d8d8b8"/><rect x="1" y="4" width="3" height="2" fill="#d8d8b8"/><rect x="1" y="7" width="3" height="2" fill="#d8d8b8"/><rect x="1" y="10" width="3" height="3" fill="#d8d8b8"/><rect x="5" y="4" width="8" height="9" fill="#fff"/><rect x="8" y="4" width="1" height="9" fill="#000"/><rect x="5" y="6" width="8" height="1" fill="#000"/><rect x="5" y="9" width="8" height="1" fill="#000"/></svg><div class="t" style="left:70px;top:572px;font-size:11px;color:#000;font-weight:400;;transform-origin:0 0;transform:scaleX(0.9057);">0xDD27</div><div class="t" style="left:119.5px;top:572px;font-size:11px;color:#000;font-weight:400;;transform-origin:0 0;transform:scaleX(1.0112);">Ignition, WOT, Vanos retarded (16x6)</div><div style="position:absolute;left:39px;top:595px;width:11px;height:1px;background-image:linear-gradient(90deg,#808080 50%,transparent 50%);background-size:2px 1px"></div><svg style="position:absolute;left:50px;top:588px;shape-rendering:crispEdges" width="14" height="14" viewBox="0 0 14 14"><rect x="0" y="0" width="14" height="14" fill="#0000ff"/><rect x="1" y="1" width="3" height="2" fill="#d8d8b8"/><rect x="5" y="1" width="3" height="2" fill="#d8d8b8"/><rect x="9" y="1" width="4" height="2" fill="#d8d8b8"/><rect x="1" y="4" width="3" height="2" fill="#d8d8b8"/><rect x="1" y="7" width="3" height="2" fill="#d8d8b8"/><rect x="1" y="10" width="3" height="3" fill="#d8d8b8"/><rect x="5" y="4" width="8" height="9" fill="#fff"/><rect x="8" y="4" width="1" height="9" fill="#000"/><rect x="5" y="6" width="8" height="1" fill="#000"/><rect x="5" y="9" width="8" height="1" fill="#000"/></svg><div class="t" style="left:70px;top:588px;font-size:11px;color:#000;font-weight:400;;transform-origin:0 0;transform:scaleX(0.9446);">0xDDA1</div><div class="t" style="left:120.1px;top:588px;font-size:11px;color:#000;font-weight:400;;transform-origin:0 0;transform:scaleX(1.0020);">Ignition, WOT, Vanos advanced (16x6)</div><div style="position:absolute;left:39px;top:611px;width:11px;height:1px;background-image:linear-gradient(90deg,#808080 50%,transparent 50%);background-size:2px 1px"></div><svg style="position:absolute;left:50px;top:604px;shape-rendering:crispEdges" width="14" height="14" viewBox="0 0 14 14"><rect x="0" y="0" width="14" height="14" fill="#0000ff"/><rect x="1" y="1" width="3" height="2" fill="#d8d8b8"/><rect x="5" y="1" width="3" height="2" fill="#d8d8b8"/><rect x="9" y="1" width="4" height="2" fill="#d8d8b8"/><rect x="1" y="4" width="3" height="2" fill="#d8d8b8"/><rect x="1" y="7" width="3" height="2" fill="#d8d8b8"/><rect x="1" y="10" width="3" height="3" fill="#d8d8b8"/><rect x="5" y="4" width="8" height="9" fill="#fff"/><rect x="8" y="4" width="1" height="9" fill="#000"/><rect x="5" y="6" width="8" height="1" fill="#000"/><rect x="5" y="9" width="8" height="1" fill="#000"/></svg><div class="t" style="left:70px;top:604px;font-size:11px;color:#000;font-weight:400;;transform-origin:0 0;transform:scaleX(0.9198);">0xDE13</div><div class="t" style="left:118.1px;top:604px;font-size:11px;color:#000;font-weight:400;;transform-origin:0 0;transform:scaleX(0.9793);">Cold engine additional ignition advance (1x6)</div><div style="position:absolute;left:39px;top:627px;width:11px;height:1px;background-image:linear-gradient(90deg,#808080 50%,transparent 50%);background-size:2px 1px"></div><svg style="position:absolute;left:50px;top:620px;shape-rendering:crispEdges" width="14" height="14" viewBox="0 0 14 14"><rect x="0" y="0" width="14" height="14" fill="#0000ff"/><rect x="1" y="1" width="3" height="2" fill="#d8d8b8"/><rect x="5" y="1" width="3" height="2" fill="#d8d8b8"/><rect x="9" y="1" width="4" height="2" fill="#d8d8b8"/><rect x="1" y="4" width="3" height="2" fill="#d8d8b8"/><rect x="1" y="7" width="3" height="2" fill="#d8d8b8"/><rect x="1" y="10" width="3" height="3" fill="#d8d8b8"/><rect x="5" y="4" width="8" height="9" fill="#fff"/><rect x="8" y="4" width="1" height="9" fill="#000"/><rect x="5" y="6" width="8" height="1" fill="#000"/><rect x="5" y="9" width="8" height="1" fill="#000"/></svg><div class="t" style="left:70px;top:620px;font-size:11px;color:#000;font-weight:400;;transform-origin:0 0;transform:scaleX(0.8923);">0xDCF3</div><div class="t" style="left:119.2px;top:620px;font-size:11px;color:#000;font-weight:400;;transform-origin:0 0;transform:scaleX(1.0014);">Idle advance Vanos retarded (1x8)</div><div style="position:absolute;left:39px;top:643px;width:11px;height:1px;background-image:linear-gradient(90deg,#808080 50%,transparent 50%);background-size:2px 1px"></div><svg style="position:absolute;left:50px;top:636px;shape-rendering:crispEdges" width="14" height="14" viewBox="0 0 14 14"><rect x="0" y="0" width="14" height="14" fill="#0000ff"/><rect x="1" y="1" width="3" height="2" fill="#d8d8b8"/><rect x="5" y="1" width="3" height="2" fill="#d8d8b8"/><rect x="9" y="1" width="4" height="2" fill="#d8d8b8"/><rect x="1" y="4" width="3" height="2" fill="#d8d8b8"/><rect x="1" y="7" width="3" height="2" fill="#d8d8b8"/><rect x="1" y="10" width="3" height="3" fill="#d8d8b8"/><rect x="5" y="4" width="8" height="9" fill="#fff"/><rect x="8" y="4" width="1" height="9" fill="#000"/><rect x="5" y="6" width="8" height="1" fill="#000"/><rect x="5" y="9" width="8" height="1" fill="#000"/></svg><div class="t" style="left:70px;top:636px;font-size:11px;color:#000;font-weight:400;;transform-origin:0 0;transform:scaleX(0.9057);">0xDD05</div><div class="t" style="left:119.2px;top:636px;font-size:11px;color:#000;font-weight:400;;transform-origin:0 0;transform:scaleX(0.9936);">Idle Advance Vanos Advanced (1x8)</div><div style="position:absolute;left:39px;top:659px;width:11px;height:1px;background-image:linear-gradient(90deg,#808080 50%,transparent 50%);background-size:2px 1px"></div><svg style="position:absolute;left:50px;top:652px;shape-rendering:crispEdges" width="14" height="14" viewBox="0 0 14 14"><rect x="0" y="0" width="14" height="14" fill="#0000ff"/><rect x="1" y="1" width="3" height="2" fill="#d8d8b8"/><rect x="5" y="1" width="3" height="2" fill="#d8d8b8"/><rect x="9" y="1" width="4" height="2" fill="#d8d8b8"/><rect x="1" y="4" width="3" height="2" fill="#d8d8b8"/><rect x="1" y="7" width="3" height="2" fill="#d8d8b8"/><rect x="1" y="10" width="3" height="3" fill="#d8d8b8"/><rect x="5" y="4" width="8" height="9" fill="#fff"/><rect x="8" y="4" width="1" height="9" fill="#000"/><rect x="5" y="6" width="8" height="1" fill="#000"/><rect x="5" y="9" width="8" height="1" fill="#000"/></svg><div class="t" style="left:70px;top:652px;font-size:11px;color:#000;font-weight:400;;transform-origin:0 0;transform:scaleX(0.9986);">-------VANOS camshaft control-------</div><div style="position:absolute;left:39px;top:675px;width:11px;height:1px;background-image:linear-gradient(90deg,#808080 50%,transparent 50%);background-size:2px 1px"></div><svg style="position:absolute;left:50px;top:668px;shape-rendering:crispEdges" width="14" height="14" viewBox="0 0 14 14"><rect x="0" y="0" width="14" height="14" fill="#0000ff"/><rect x="1" y="1" width="3" height="2" fill="#d8d8b8"/><rect x="5" y="1" width="3" height="2" fill="#d8d8b8"/><rect x="9" y="1" width="4" height="2" fill="#d8d8b8"/><rect x="1" y="4" width="3" height="2" fill="#d8d8b8"/><rect x="1" y="7" width="3" height="2" fill="#d8d8b8"/><rect x="1" y="10" width="3" height="3" fill="#d8d8b8"/><rect x="5" y="4" width="8" height="9" fill="#fff"/><rect x="8" y="4" width="1" height="9" fill="#000"/><rect x="5" y="6" width="8" height="1" fill="#000"/><rect x="5" y="9" width="8" height="1" fill="#000"/></svg><div class="t" style="left:70px;top:668px;font-size:11px;color:#000;font-weight:400;;transform-origin:0 0;transform:scaleX(0.9198);">0xD5E6</div><div class="t" style="left:118.1px;top:668px;font-size:11px;color:#000;font-weight:400;;transform-origin:0 0;transform:scaleX(1.0109);">Vanos, PT, actuator dwell -retarded- (8x8)</div><div style="position:absolute;left:39px;top:691px;width:11px;height:1px;background-image:linear-gradient(90deg,#808080 50%,transparent 50%);background-size:2px 1px"></div><svg style="position:absolute;left:50px;top:684px;shape-rendering:crispEdges" width="14" height="14" viewBox="0 0 14 14"><rect x="0" y="0" width="14" height="14" fill="#0000ff"/><rect x="1" y="1" width="3" height="2" fill="#d8d8b8"/><rect x="5" y="1" width="3" height="2" fill="#d8d8b8"/><rect x="9" y="1" width="4" height="2" fill="#d8d8b8"/><rect x="1" y="4" width="3" height="2" fill="#d8d8b8"/><rect x="1" y="7" width="3" height="2" fill="#d8d8b8"/><rect x="1" y="10" width="3" height="3" fill="#d8d8b8"/><rect x="5" y="4" width="8" height="9" fill="#fff"/><rect x="8" y="4" width="1" height="9" fill="#000"/><rect x="5" y="6" width="8" height="1" fill="#000"/><rect x="5" y="9" width="8" height="1" fill="#000"/></svg><div class="t" style="left:70px;top:684px;font-size:11px;color:#000;font-weight:400;;transform-origin:0 0;transform:scaleX(0.9198);">0xD63A</div><div class="t" style="left:119.5px;top:684px;font-size:11px;color:#000;font-weight:400;;transform-origin:0 0;transform:scaleX(0.9994);">Vanos, PT, actuator dwell -advanced- (8x8)</div><div style="position:absolute;left:39px;top:707px;width:11px;height:1px;background-image:linear-gradient(90deg,#808080 50%,transparent 50%);background-size:2px 1px"></div><svg style="position:absolute;left:50px;top:700px;shape-rendering:crispEdges" width="14" height="14" viewBox="0 0 14 14"><rect x="0" y="0" width="14" height="14" fill="#0000ff"/><rect x="1" y="1" width="3" height="2" fill="#d8d8b8"/><rect x="5" y="1" width="3" height="2" fill="#d8d8b8"/><rect x="9" y="1" width="4" height="2" fill="#d8d8b8"/><rect x="1" y="4" width="3" height="2" fill="#d8d8b8"/><rect x="1" y="7" width="3" height="2" fill="#d8d8b8"/><rect x="1" y="10" width="3" height="3" fill="#d8d8b8"/><rect x="5" y="4" width="8" height="9" fill="#fff"/><rect x="8" y="4" width="1" height="9" fill="#000"/><rect x="5" y="6" width="8" height="1" fill="#000"/><rect x="5" y="9" width="8" height="1" fill="#000"/></svg><div class="t" style="left:70px;top:700px;font-size:11px;color:#000;font-weight:400;;transform-origin:0 0;transform:scaleX(0.9057);">0xD68C</div><div class="t" style="left:119.5px;top:700px;font-size:11px;color:#000;font-weight:400;;transform-origin:0 0;transform:scaleX(1.0104);">Vanos, WOT, actuator dwell -retarded- (16x1)</div><div style="position:absolute;left:39px;top:723px;width:11px;height:1px;background-image:linear-gradient(90deg,#808080 50%,transparent 50%);background-size:2px 1px"></div><svg style="position:absolute;left:50px;top:716px;shape-rendering:crispEdges" width="14" height="14" viewBox="0 0 14 14"><rect x="0" y="0" width="14" height="14" fill="#0000ff"/><rect x="1" y="1" width="3" height="2" fill="#d8d8b8"/><rect x="5" y="1" width="3" height="2" fill="#d8d8b8"/><rect x="9" y="1" width="4" height="2" fill="#d8d8b8"/><rect x="1" y="4" width="3" height="2" fill="#d8d8b8"/><rect x="1" y="7" width="3" height="2" fill="#d8d8b8"/><rect x="1" y="10" width="3" height="3" fill="#d8d8b8"/><rect x="5" y="4" width="8" height="9" fill="#fff"/><rect x="8" y="4" width="1" height="9" fill="#000"/><rect x="5" y="6" width="8" height="1" fill="#000"/><rect x="5" y="9" width="8" height="1" fill="#000"/></svg><div class="t" style="left:70px;top:716px;font-size:11px;color:#000;font-weight:400;;transform-origin:0 0;transform:scaleX(0.8920);">0xD6AE</div><div class="t" style="left:119.5px;top:716px;font-size:11px;color:#000;font-weight:400;;transform-origin:0 0;transform:scaleX(1.0007);">Vanos, WOT, actuator dwell -advanced- (16x1)</div><div style="position:absolute;left:39px;top:739px;width:11px;height:1px;background-image:linear-gradient(90deg,#808080 50%,transparent 50%);background-size:2px 1px"></div><svg style="position:absolute;left:50px;top:732px;shape-rendering:crispEdges" width="14" height="14" viewBox="0 0 14 14"><rect x="0" y="0" width="14" height="14" fill="#0000ff"/><rect x="1" y="1" width="3" height="2" fill="#d8d8b8"/><rect x="5" y="1" width="3" height="2" fill="#d8d8b8"/><rect x="9" y="1" width="4" height="2" fill="#d8d8b8"/><rect x="1" y="4" width="3" height="2" fill="#d8d8b8"/><rect x="1" y="7" width="3" height="2" fill="#d8d8b8"/><rect x="1" y="10" width="3" height="3" fill="#d8d8b8"/><rect x="5" y="4" width="8" height="9" fill="#fff"/><rect x="8" y="4" width="1" height="9" fill="#000"/><rect x="5" y="6" width="8" height="1" fill="#000"/><rect x="5" y="9" width="8" height="1" fill="#000"/></svg><div class="t" style="left:70px;top:732px;font-size:11px;color:#000;font-weight:400;;transform-origin:0 0;transform:scaleX(0.9343);">0xD6F1</div><div class="t" style="left:118.1px;top:732px;font-size:11px;color:#000;font-weight:400;;transform-origin:0 0;transform:scaleX(0.9876);">Vanos, MIN Load for advance (8x1)</div><div style="position:absolute;left:39px;top:755px;width:11px;height:1px;background-image:linear-gradient(90deg,#808080 50%,transparent 50%);background-size:2px 1px"></div><svg style="position:absolute;left:50px;top:748px;shape-rendering:crispEdges" width="14" height="14" viewBox="0 0 14 14"><rect x="0" y="0" width="14" height="14" fill="#0000ff"/><rect x="1" y="1" width="3" height="2" fill="#d8d8b8"/><rect x="5" y="1" width="3" height="2" fill="#d8d8b8"/><rect x="9" y="1" width="4" height="2" fill="#d8d8b8"/><rect x="1" y="4" width="3" height="2" fill="#d8d8b8"/><rect x="1" y="7" width="3" height="2" fill="#d8d8b8"/><rect x="1" y="10" width="3" height="3" fill="#d8d8b8"/><rect x="5" y="4" width="8" height="9" fill="#fff"/><rect x="8" y="4" width="1" height="9" fill="#000"/><rect x="5" y="6" width="8" height="1" fill="#000"/><rect x="5" y="9" width="8" height="1" fill="#000"/></svg><div class="t" style="left:70px;top:748px;font-size:11px;color:#000;font-weight:400;;transform-origin:0 0;transform:scaleX(0.9493);">0xD702</div><div class="t" style="left:118.1px;top:748px;font-size:11px;color:#000;font-weight:400;;transform-origin:0 0;transform:scaleX(0.9905);">Vanos, MAX Load for retard (8x1)</div><div style="position:absolute;left:39px;top:771px;width:11px;height:1px;background-image:linear-gradient(90deg,#808080 50%,transparent 50%);background-size:2px 1px"></div><svg style="position:absolute;left:50px;top:764px;shape-rendering:crispEdges" width="14" height="14" viewBox="0 0 14 14"><rect x="0" y="0" width="14" height="14" fill="#0000ff"/><rect x="1" y="1" width="3" height="2" fill="#d8d8b8"/><rect x="5" y="1" width="3" height="2" fill="#d8d8b8"/><rect x="9" y="1" width="4" height="2" fill="#d8d8b8"/><rect x="1" y="4" width="3" height="2" fill="#d8d8b8"/><rect x="1" y="7" width="3" height="2" fill="#d8d8b8"/><rect x="1" y="10" width="3" height="3" fill="#d8d8b8"/><rect x="5" y="4" width="8" height="9" fill="#fff"/><rect x="8" y="4" width="1" height="9" fill="#000"/><rect x="5" y="6" width="8" height="1" fill="#000"/><rect x="5" y="9" width="8" height="1" fill="#000"/></svg><div class="t" style="left:70px;top:764px;font-size:11px;color:#000;font-weight:400;;transform-origin:0 0;transform:scaleX(1.0251);">----------------Coolant Temp Enrichment----------------</div><div style="position:absolute;left:39px;top:787px;width:11px;height:1px;background-image:linear-gradient(90deg,#808080 50%,transparent 50%);background-size:2px 1px"></div><svg style="position:absolute;left:50px;top:780px;shape-rendering:crispEdges" width="14" height="14" viewBox="0 0 14 14"><rect x="0" y="0" width="14" height="14" fill="#0000ff"/><rect x="1" y="1" width="3" height="2" fill="#d8d8b8"/><rect x="5" y="1" width="3" height="2" fill="#d8d8b8"/><rect x="9" y="1" width="4" height="2" fill="#d8d8b8"/><rect x="1" y="4" width="3" height="2" fill="#d8d8b8"/><rect x="1" y="7" width="3" height="2" fill="#d8d8b8"/><rect x="1" y="10" width="3" height="3" fill="#d8d8b8"/><rect x="5" y="4" width="8" height="9" fill="#fff"/><rect x="8" y="4" width="1" height="9" fill="#000"/><rect x="5" y="6" width="8" height="1" fill="#000"/><rect x="5" y="9" width="8" height="1" fill="#000"/></svg><div class="t" style="left:70px;top:780px;font-size:11px;color:#000;font-weight:400;;transform-origin:0 0;transform:scaleX(0.9201);">0xD3FF</div><div class="t" style="left:118.1px;top:780px;font-size:11px;color:#000;font-weight:400;;transform-origin:0 0;transform:scaleX(1.0449);">Engine temp. vs. enrichment (A/T in P or N)</div><svg width="0" height="0" style="position:absolute"><defs><symbol id="isave" viewBox="0 0 14 14"><rect x="0" y="0" width="14" height="14" fill="#000"/><rect x="1" y="1" width="2" height="12" fill="#909000"/><rect x="12" y="3" width="1" height="10" fill="#909000"/><rect x="3" y="1" width="7.5" height="6" fill="#fff"/><rect x="2" y="7.3" width="11" height="1.2" fill="#909000"/><rect x="9" y="10" width="2" height="2.5" fill="#fff"/><rect x="12" y="1" width="1" height="1" fill="#fff"/></symbol><symbol id="ix" viewBox="0 0 12 13"><path d="M1 1l10 11M11 1L1 12" stroke="#ff0000" stroke-width="2.2"/></symbol><symbol id="igraph" viewBox="0 0 15 13"><g fill="#000"><rect x="0" y="0" width="1" height="1"/><rect x="0" y="2" width="1" height="1"/><rect x="0" y="4" width="1" height="1"/><rect x="0" y="6" width="1" height="1"/><rect x="0" y="8" width="1" height="1"/><rect x="0" y="10" width="1" height="1"/><rect x="0" y="12" width="2" height="1"/><rect x="3" y="12" width="1" height="1"/><rect x="5" y="12" width="1" height="1"/><rect x="7" y="12" width="1" height="1"/><rect x="9" y="12" width="1" height="1"/><rect x="11" y="12" width="1" height="1"/><rect x="13" y="12" width="1" height="1"/></g><path d="M0.5 4.5L2 4.5 4 6.5 5.5 8 7 5.5 9 6 11 8 13 5 14 3" fill="none" stroke="#ff0000" stroke-width="1.3"/></symbol><symbol id="iscale" viewBox="0 0 17 15"><rect x="7.5" y="1" width="2" height="13" fill="#000"/><rect x="3" y="13" width="11" height="2" fill="#000"/><path d="M2 3h13" stroke="#000" stroke-width="1.3"/><path d="M8.5 0l2 2h-4z" fill="#000"/><path d="M3 3L0.5 9M3 3l2.5 6M14 3l-2.5 6M14 3l2.5 6" stroke="#000" stroke-width="0.8"/><path d="M0.3 9h5.4q-0.5 2-2.7 2t-2.7-2zM11.3 9h5.4q-0.5 2-2.7 2t-2.7-2z" fill="#ffff00"/><path d="M0.3 9.3q0.5 2 2.7 2t2.7-2M11.3 9.3q0.5 2 2.7 2t2.7-2" fill="none" stroke="#000" stroke-width="0.9"/></symbol><symbol id="itri" viewBox="0 0 25 15"><path d="M0 1h4.5v2H2v9H0z" fill="#0000ff"/><path d="M9.5 1h4v3.5h-2V3h-2z" fill="#0000ff"/><rect x="3" y="10" width="8" height="2.2" fill="#0000ff"/><path d="M7 1.2L1.2 13.8h11.6z" fill="none" stroke="#000" stroke-width="2.1" stroke-linejoin="miter"/><path d="M16.5 6h7.5l-3.75 4z" fill="#000"/></symbol><symbol id="igx" viewBox="0 0 16 14"><path d="M1.2 1.2L8.2 10.2M8 1.2L1.2 10.6" stroke="#a0a0a0" stroke-width="1.9"/><path d="M0 10.4h2v1.7h7V8l6.2 6H0z" fill="#a0a0a0"/></symbol><symbol id="igy" viewBox="0 0 16 14"><path d="M1.3 1.3L5.3 6V13M5.3 6L8.8 3" fill="none" stroke="#a0a0a0" stroke-width="2"/><path d="M10.6 0L16 5.8H12.1V14H9.6V5.8H5.5z" fill="#a0a0a0"/></symbol><symbol id="igslash" viewBox="0 0 5 11"><path d="M4 1L1 10" stroke="#a0a0a0" stroke-width="1.6"/></symbol><symbol id="iga" viewBox="0 0 12 13"><path d="M1 13L6 1l5 12M3 9h6" fill="none" stroke="#a0a0a0" stroke-width="1.8"/></symbol></defs></svg><div style="position:absolute;left:611px;top:173px;width:645px;height:393px;background:linear-gradient(#99b3d1 0px,#aac3df 16px,#b9d1ea 30px,#b9d1ea 100%);border:1px solid #2a2a2a;border-radius:5px 5px 0 0"></div><div style="position:absolute;left:612px;top:174px;width:643px;height:391px;border-top:1px solid #fff;border-left:1px solid #fff;border-right:1px solid #5ed0f4;border-bottom:1px solid #5ed0f4;border-radius:4px 4px 0 0"></div><svg style="position:absolute;left:621px;top:186px;shape-rendering:crispEdges" width="16" height="12" viewBox="0 0 16 12"><rect x="0" y="2" width="16" height="8" fill="#000"/><rect x="1.5" y="0" width="1.6" height="2" fill="#000"/><rect x="1.5" y="10" width="1.6" height="2" fill="#000"/><rect x="4.5" y="0" width="1.6" height="2" fill="#000"/><rect x="4.5" y="10" width="1.6" height="2" fill="#000"/><rect x="7.5" y="0" width="1.6" height="2" fill="#000"/><rect x="7.5" y="10" width="1.6" height="2" fill="#000"/><rect x="10.5" y="0" width="1.6" height="2" fill="#000"/><rect x="10.5" y="10" width="1.6" height="2" fill="#000"/><rect x="13.5" y="0" width="1.6" height="2" fill="#000"/><rect x="13.5" y="10" width="1.6" height="2" fill="#000"/></svg><div class="t" style="left:641px;top:186px;font-size:12px;color:#000;font-weight:400;;transform-origin:0 0;transform:scaleX(0.8698);">0xDE8B</div><div class="t" style="left:692.2px;top:186px;font-size:12px;color:#000;font-weight:400;;transform-origin:0 0;transform:scaleX(0.9637);">Ignition, PT, Vanos retarded (16x12)</div><div style="position:absolute;left:1214px;top:183px;width:32px;height:18px;background:linear-gradient(#f0b0a0 0%,#e09080 40%,#c04020 45%,#c85030 75%,#d87060 100%);border:1px solid #4a1020;border-radius:3px;box-shadow:inset 0 0 0 1px rgba(255,225,215,0.75)"></div><svg style="position:absolute;left:1224px;top:187px;" width="12" height="10" viewBox="0 0 12 10"><path d="M2.5 2l7 6M9.5 2l-7 6" stroke="#3a4050" stroke-width="4.2" stroke-linecap="round"/><path d="M2.5 2l7 6M9.5 2l-7 6" stroke="#fafafa" stroke-width="2.4" stroke-linecap="round"/></svg><div style="position:absolute;left:619px;top:204px;width:629px;height:25px;background:#f0f0f0"></div><div style="position:absolute;left:621px;top:206px;width:2px;height:20px;background:#fff"></div><div style="position:absolute;left:623px;top:206px;width:1px;height:20px;background:#a0a0a0"></div><div style="position:absolute;left:621px;top:226px;width:3px;height:1px;background:#a0a0a0"></div><svg style="position:absolute;left:632px;top:210px" width="14" height="14"><use href="#isave"/></svg><svg style="position:absolute;left:656px;top:211px" width="12" height="13"><use href="#ix"/></svg><svg style="position:absolute;left:678px;top:211px" width="15" height="13"><use href="#igraph"/></svg><svg style="position:absolute;left:701px;top:209px" width="17" height="15"><use href="#iscale"/></svg><svg style="position:absolute;left:724px;top:209px" width="25" height="15"><use href="#itri"/></svg><svg style="position:absolute;left:756px;top:210px" width="16" height="14"><use href="#igx"/></svg><svg style="position:absolute;left:779px;top:210px" width="16" height="14"><use href="#igy"/></svg><svg style="position:absolute;left:804px;top:212px" width="5" height="11"><use href="#igslash"/></svg><div style="position:absolute;left:813px;top:206px;width:2px;height:20px;background:#fff"></div><div style="position:absolute;left:815px;top:206px;width:1px;height:20px;background:#a0a0a0"></div><div style="position:absolute;left:813px;top:226px;width:3px;height:1px;background:#a0a0a0"></div><div class="t" style="left:826.7px;top:210px;font-size:12px;color:#000;font-weight:400;;transform-origin:0 0;transform:scaleX(0.8975);">Function:</div><div style="position:absolute;left:875px;top:206px;width:105px;height:20px;background:#fdfdfd;border:1px solid #d9d9d9;border-bottom-color:#bcbcbc"></div><div class="t" style="left:878px;top:210px;font-size:12px;color:#000;font-weight:400;;transform-origin:0 0;transform:scaleX(1.0092);">Offset (+/-)</div><svg style="position:absolute;left:966px;top:214px;" width="9" height="6" viewBox="0 0 9 6"><path d="M0.5 0.5l4 4 4-4" fill="none" stroke="#404040" stroke-width="1"/></svg><div class="t" style="left:987.6px;top:210px;font-size:12px;color:#000;font-weight:400;;transform-origin:0 0;transform:scaleX(0.8811);">Value:</div><div style="position:absolute;left:1019px;top:206px;width:46px;height:20px;background:#fff;border-bottom:1px solid #7a7a7a"></div><div class="t" style="left:1022px;top:210px;font-size:12px;color:#000;font-weight:400;;">1.0</div><div style="position:absolute;left:1068px;top:207px;width:49px;height:19px;background:#fdfdfd;border:1px solid #d0d0d0;border-radius:3px"></div><div class="t" style="left:1073px;top:211px;font-size:12px;color:#000;font-weight:400;;transform-origin:0 0;transform:scaleX(0.9041);">Execute</div><div style="position:absolute;left:619px;top:229px;width:629px;height:306px;border-top:1px solid #a0a0a0;border-left:1px solid #a0a0a0;border-right:1px solid #fff;border-bottom:1px solid #fff"></div><div style="position:absolute;left:620px;top:230px;width:627px;height:304px;border-top:1px solid #696969;border-left:1px solid #696969;border-right:1px solid #e3e3e3;border-bottom:1px solid #e3e3e3"></div><div style="position:absolute;left:621px;top:231px;width:625px;height:302px;background:#404040"></div><div style="position:absolute;left:621px;top:231px;width:625px;height:15px;background:#f0f0f0;border:1px solid #a0a0a0;box-shadow:inset 1px 1px #fff"></div><div class="t" style="left:799.2px;top:233px;font-size:11px;color:#000;font-weight:700;-webkit-text-stroke:0;transform-origin:0 0;transform:scaleX(1.0366);">0xDE8B</div><div class="t" style="left:859.3px;top:233px;font-size:11px;color:#000;font-weight:700;-webkit-text-stroke:0;transform-origin:0 0;transform:scaleX(1.1187);">Ignition, PT, Vanos retarded (16x12)</div><div style="position:absolute;left:621px;top:246px;width:598px;height:256px;background:#fff"></div><div style="position:absolute;left:667px;top:262px;width:552px;height:240px;background:#dcdfdf"></div><div style="position:absolute;left:621px;top:262px;width:46px;height:240px;background:#fff"></div><div style="position:absolute;left:621px;top:247px;width:45px;height:14px;background:#f0f0f0;border:1px solid #a0a0a0;box-shadow:inset 1px 1px #fff"></div><div style="position:absolute;left:667px;top:247px;width:45px;height:14px;background:#dcdcdc;border:1px solid #a0a0a0;box-shadow:inset 1px 1px #fff"></div><div class="t" style="left:667.5px;width:45px;top:249px;font-size:11px;color:#000;font-weight:400;text-align:center;">1.0</div><div style="position:absolute;left:713px;top:247px;width:45px;height:14px;background:#f0f0f0;border:1px solid #a0a0a0;box-shadow:inset 1px 1px #fff"></div><div class="t" style="left:713.5px;width:45px;top:249px;font-size:11px;color:#000;font-weight:400;text-align:center;">1.5</div><div style="position:absolute;left:759px;top:247px;width:45px;height:14px;background:#f0f0f0;border:1px solid #a0a0a0;box-shadow:inset 1px 1px #fff"></div><div class="t" style="left:759.5px;width:45px;top:249px;font-size:11px;color:#000;font-weight:400;text-align:center;">2.0</div><div style="position:absolute;left:805px;top:247px;width:45px;height:14px;background:#f0f0f0;border:1px solid #a0a0a0;box-shadow:inset 1px 1px #fff"></div><div class="t" style="left:805.5px;width:45px;top:249px;font-size:11px;color:#000;font-weight:400;text-align:center;">2.6</div><div style="position:absolute;left:851px;top:247px;width:45px;height:14px;background:#f0f0f0;border:1px solid #a0a0a0;box-shadow:inset 1px 1px #fff"></div><div class="t" style="left:851.5px;width:45px;top:249px;font-size:11px;color:#000;font-weight:400;text-align:center;">3.2</div><div style="position:absolute;left:897px;top:247px;width:45px;height:14px;background:#f0f0f0;border:1px solid #a0a0a0;box-shadow:inset 1px 1px #fff"></div><div class="t" style="left:897.5px;width:45px;top:249px;font-size:11px;color:#000;font-weight:400;text-align:center;">3.9</div><div style="position:absolute;left:943px;top:247px;width:45px;height:14px;background:#f0f0f0;border:1px solid #a0a0a0;box-shadow:inset 1px 1px #fff"></div><div class="t" style="left:943.5px;width:45px;top:249px;font-size:11px;color:#000;font-weight:400;text-align:center;">4.6</div><div style="position:absolute;left:989px;top:247px;width:45px;height:14px;background:#f0f0f0;border:1px solid #a0a0a0;box-shadow:inset 1px 1px #fff"></div><div class="t" style="left:989.5px;width:45px;top:249px;font-size:11px;color:#000;font-weight:400;text-align:center;">5.3</div><div style="position:absolute;left:1035px;top:247px;width:45px;height:14px;background:#f0f0f0;border:1px solid #a0a0a0;box-shadow:inset 1px 1px #fff"></div><div class="t" style="left:1035.5px;width:45px;top:249px;font-size:11px;color:#000;font-weight:400;text-align:center;">6.0</div><div style="position:absolute;left:1081px;top:247px;width:45px;height:14px;background:#f0f0f0;border:1px solid #a0a0a0;box-shadow:inset 1px 1px #fff"></div><div class="t" style="left:1081.5px;width:45px;top:249px;font-size:11px;color:#000;font-weight:400;text-align:center;">6.60</div><div style="position:absolute;left:1127px;top:247px;width:45px;height:14px;background:#f0f0f0;border:1px solid #a0a0a0;box-shadow:inset 1px 1px #fff"></div><div class="t" style="left:1127.5px;width:45px;top:249px;font-size:11px;color:#000;font-weight:400;text-align:center;">7.4</div><div style="position:absolute;left:1173px;top:247px;width:45px;height:14px;background:#f0f0f0;border:1px solid #a0a0a0;box-shadow:inset 1px 1px #fff"></div><div class="t" style="left:1173.5px;width:45px;top:249px;font-size:11px;color:#000;font-weight:400;text-align:center;">8.2</div><div style="position:absolute;left:621px;top:262px;width:45px;height:14px;background:#dcdcdc;border:1px solid #a0a0a0;box-shadow:inset 1px 1px #fff"></div><div class="t" style="right:666px;top:263px;font-size:11px;color:#000;font-weight:400;text-align:right;">680</div><div style="position:absolute;left:667px;top:262px;width:46px;height:15px;background:rgb(196,164,164);border:1px solid #000"></div><div class="t" style="right:618px;top:263px;font-size:11px;color:#000;font-weight:400;text-align:right;">15</div><div style="position:absolute;left:714px;top:263px;width:44px;height:13px;background:rgb(213,147,147)"></div><div class="t" style="right:572px;top:263px;font-size:11px;color:#000;font-weight:400;text-align:right;">15</div><div style="position:absolute;left:760px;top:263px;width:44px;height:13px;background:rgb(213,147,147)"></div><div class="t" style="right:526px;top:263px;font-size:11px;color:#000;font-weight:400;text-align:right;">15</div><div style="position:absolute;left:806px;top:263px;width:44px;height:13px;background:rgb(213,147,147)"></div><div class="t" style="right:480px;top:263px;font-size:11px;color:#000;font-weight:400;text-align:right;">15</div><div style="position:absolute;left:852px;top:263px;width:44px;height:13px;background:rgb(213,147,147)"></div><div class="t" style="right:434px;top:263px;font-size:11px;color:#000;font-weight:400;text-align:right;">15</div><div style="position:absolute;left:898px;top:263px;width:44px;height:13px;background:rgb(207,158,158)"></div><div class="t" style="right:388px;top:263px;font-size:11px;color:#000;font-weight:400;text-align:right;">12</div><div style="position:absolute;left:944px;top:263px;width:44px;height:13px;background:rgb(196,176,176)"></div><div class="t" style="right:342px;top:263px;font-size:11px;color:#000;font-weight:400;text-align:right;">07</div><div style="position:absolute;left:990px;top:263px;width:44px;height:13px;background:rgb(188,190,190)"></div><div class="t" style="right:296px;top:263px;font-size:11px;color:#000;font-weight:400;text-align:right;">03</div><div style="position:absolute;left:1036px;top:263px;width:44px;height:13px;background:rgb(182,201,201)"></div><div class="t" style="right:250px;top:263px;font-size:11px;color:#000;font-weight:400;text-align:right;">00</div><div style="position:absolute;left:1082px;top:263px;width:44px;height:13px;background:rgb(182,201,201)"></div><div class="t" style="right:204px;top:263px;font-size:11px;color:#000;font-weight:400;text-align:right;">00</div><div style="position:absolute;left:1128px;top:263px;width:44px;height:13px;background:rgb(182,201,201)"></div><div class="t" style="right:158px;top:263px;font-size:11px;color:#000;font-weight:400;text-align:right;">00</div><div style="position:absolute;left:1174px;top:263px;width:44px;height:13px;background:rgb(182,201,201)"></div><div class="t" style="right:112px;top:263px;font-size:11px;color:#000;font-weight:400;text-align:right;">00</div><div style="position:absolute;left:621px;top:277px;width:45px;height:14px;background:#f0f0f0;border:1px solid #a0a0a0;box-shadow:inset 1px 1px #fff"></div><div class="t" style="right:666px;top:278px;font-size:11px;color:#000;font-weight:400;text-align:right;">880</div><div style="position:absolute;left:668px;top:278px;width:44px;height:13px;background:rgb(213,147,147)"></div><div class="t" style="right:618px;top:278px;font-size:11px;color:#000;font-weight:400;text-align:right;">15</div><div style="position:absolute;left:714px;top:278px;width:44px;height:13px;background:rgb(213,147,147)"></div><div class="t" style="right:572px;top:278px;font-size:11px;color:#000;font-weight:400;text-align:right;">15</div><div style="position:absolute;left:760px;top:278px;width:44px;height:13px;background:rgb(215,143,143)"></div><div class="t" style="right:526px;top:278px;font-size:11px;color:#000;font-weight:400;text-align:right;">16</div><div style="position:absolute;left:806px;top:278px;width:44px;height:13px;background:rgb(221,133,133)"></div><div class="t" style="right:480px;top:278px;font-size:11px;color:#000;font-weight:400;text-align:right;">19</div><div style="position:absolute;left:852px;top:278px;width:44px;height:13px;background:rgb(219,136,136)"></div><div class="t" style="right:434px;top:278px;font-size:11px;color:#000;font-weight:400;text-align:right;">18</div><div style="position:absolute;left:898px;top:278px;width:44px;height:13px;background:rgb(213,147,147)"></div><div class="t" style="right:388px;top:278px;font-size:11px;color:#000;font-weight:400;text-align:right;">15</div><div style="position:absolute;left:944px;top:278px;width:44px;height:13px;background:rgb(205,161,161)"></div><div class="t" style="right:342px;top:278px;font-size:11px;color:#000;font-weight:400;text-align:right;">11</div><div style="position:absolute;left:990px;top:278px;width:44px;height:13px;background:rgb(198,172,172)"></div><div class="t" style="right:296px;top:278px;font-size:11px;color:#000;font-weight:400;text-align:right;">08</div><div style="position:absolute;left:1036px;top:278px;width:44px;height:13px;background:rgb(192,183,183)"></div><div class="t" style="right:250px;top:278px;font-size:11px;color:#000;font-weight:400;text-align:right;">05</div><div style="position:absolute;left:1082px;top:278px;width:44px;height:13px;background:rgb(190,187,187)"></div><div class="t" style="right:204px;top:278px;font-size:11px;color:#000;font-weight:400;text-align:right;">04</div><div style="position:absolute;left:1128px;top:278px;width:44px;height:13px;background:rgb(190,187,187)"></div><div class="t" style="right:158px;top:278px;font-size:11px;color:#000;font-weight:400;text-align:right;">04</div><div style="position:absolute;left:1174px;top:278px;width:44px;height:13px;background:rgb(190,187,187)"></div><div class="t" style="right:112px;top:278px;font-size:11px;color:#000;font-weight:400;text-align:right;">04</div><div style="position:absolute;left:621px;top:292px;width:45px;height:14px;background:#f0f0f0;border:1px solid #a0a0a0;box-shadow:inset 1px 1px #fff"></div><div class="t" style="right:666px;top:293px;font-size:11px;color:#000;font-weight:400;text-align:right;">1120</div><div style="position:absolute;left:668px;top:293px;width:44px;height:13px;background:rgb(213,147,147)"></div><div class="t" style="right:618px;top:293px;font-size:11px;color:#000;font-weight:400;text-align:right;">15</div><div style="position:absolute;left:714px;top:293px;width:44px;height:13px;background:rgb(215,143,143)"></div><div class="t" style="right:572px;top:293px;font-size:11px;color:#000;font-weight:400;text-align:right;">16</div><div style="position:absolute;left:760px;top:293px;width:44px;height:13px;background:rgb(219,136,136)"></div><div class="t" style="right:526px;top:293px;font-size:11px;color:#000;font-weight:400;text-align:right;">18</div><div style="position:absolute;left:806px;top:293px;width:44px;height:13px;background:rgb(228,122,122)"></div><div class="t" style="right:480px;top:293px;font-size:11px;color:#000;font-weight:400;text-align:right;">22</div><div style="position:absolute;left:852px;top:293px;width:44px;height:13px;background:rgb(226,125,125)"></div><div class="t" style="right:434px;top:293px;font-size:11px;color:#000;font-weight:400;text-align:right;">21</div><div style="position:absolute;left:898px;top:293px;width:44px;height:13px;background:rgb(221,133,133)"></div><div class="t" style="right:388px;top:293px;font-size:11px;color:#000;font-weight:400;text-align:right;">19</div><div style="position:absolute;left:944px;top:293px;width:44px;height:13px;background:rgb(215,143,143)"></div><div class="t" style="right:342px;top:293px;font-size:11px;color:#000;font-weight:400;text-align:right;">16</div><div style="position:absolute;left:990px;top:293px;width:44px;height:13px;background:rgb(207,158,158)"></div><div class="t" style="right:296px;top:293px;font-size:11px;color:#000;font-weight:400;text-align:right;">12</div><div style="position:absolute;left:1036px;top:293px;width:44px;height:13px;background:rgb(200,169,169)"></div><div class="t" style="right:250px;top:293px;font-size:11px;color:#000;font-weight:400;text-align:right;">09</div><div style="position:absolute;left:1082px;top:293px;width:44px;height:13px;background:rgb(200,169,169)"></div><div class="t" style="right:204px;top:293px;font-size:11px;color:#000;font-weight:400;text-align:right;">09</div><div style="position:absolute;left:1128px;top:293px;width:44px;height:13px;background:rgb(200,169,169)"></div><div class="t" style="right:158px;top:293px;font-size:11px;color:#000;font-weight:400;text-align:right;">09</div><div style="position:absolute;left:1174px;top:293px;width:44px;height:13px;background:rgb(200,169,169)"></div><div class="t" style="right:112px;top:293px;font-size:11px;color:#000;font-weight:400;text-align:right;">09</div><div style="position:absolute;left:621px;top:307px;width:45px;height:14px;background:#f0f0f0;border:1px solid #a0a0a0;box-shadow:inset 1px 1px #fff"></div><div class="t" style="right:666px;top:308px;font-size:11px;color:#000;font-weight:400;text-align:right;">1320</div><div style="position:absolute;left:668px;top:308px;width:44px;height:13px;background:rgb(217,140,140)"></div><div class="t" style="right:618px;top:308px;font-size:11px;color:#000;font-weight:400;text-align:right;">17</div><div style="position:absolute;left:714px;top:308px;width:44px;height:13px;background:rgb(219,136,136)"></div><div class="t" style="right:572px;top:308px;font-size:11px;color:#000;font-weight:400;text-align:right;">18</div><div style="position:absolute;left:760px;top:308px;width:44px;height:13px;background:rgb(226,125,125)"></div><div class="t" style="right:526px;top:308px;font-size:11px;color:#000;font-weight:400;text-align:right;">21</div><div style="position:absolute;left:806px;top:308px;width:44px;height:13px;background:rgb(232,115,115)"></div><div class="t" style="right:480px;top:308px;font-size:11px;color:#000;font-weight:400;text-align:right;">24</div><div style="position:absolute;left:852px;top:308px;width:44px;height:13px;background:rgb(228,122,122)"></div><div class="t" style="right:434px;top:308px;font-size:11px;color:#000;font-weight:400;text-align:right;">22</div><div style="position:absolute;left:898px;top:308px;width:44px;height:13px;background:rgb(226,125,125)"></div><div class="t" style="right:388px;top:308px;font-size:11px;color:#000;font-weight:400;text-align:right;">21</div><div style="position:absolute;left:944px;top:308px;width:44px;height:13px;background:rgb(219,136,136)"></div><div class="t" style="right:342px;top:308px;font-size:11px;color:#000;font-weight:400;text-align:right;">18</div><div style="position:absolute;left:990px;top:308px;width:44px;height:13px;background:rgb(213,147,147)"></div><div class="t" style="right:296px;top:308px;font-size:11px;color:#000;font-weight:400;text-align:right;">15</div><div style="position:absolute;left:1036px;top:308px;width:44px;height:13px;background:rgb(207,158,158)"></div><div class="t" style="right:250px;top:308px;font-size:11px;color:#000;font-weight:400;text-align:right;">12</div><div style="position:absolute;left:1082px;top:308px;width:44px;height:13px;background:rgb(205,161,161)"></div><div class="t" style="right:204px;top:308px;font-size:11px;color:#000;font-weight:400;text-align:right;">11</div><div style="position:absolute;left:1128px;top:308px;width:44px;height:13px;background:rgb(205,161,161)"></div><div class="t" style="right:158px;top:308px;font-size:11px;color:#000;font-weight:400;text-align:right;">11</div><div style="position:absolute;left:1174px;top:308px;width:44px;height:13px;background:rgb(205,161,161)"></div><div class="t" style="right:112px;top:308px;font-size:11px;color:#000;font-weight:400;text-align:right;">11</div><div style="position:absolute;left:621px;top:322px;width:45px;height:14px;background:#f0f0f0;border:1px solid #a0a0a0;box-shadow:inset 1px 1px #fff"></div><div class="t" style="right:666px;top:323px;font-size:11px;color:#000;font-weight:400;text-align:right;">1600</div><div style="position:absolute;left:668px;top:323px;width:44px;height:13px;background:rgb(221,133,133)"></div><div class="t" style="right:618px;top:323px;font-size:11px;color:#000;font-weight:400;text-align:right;">19</div><div style="position:absolute;left:714px;top:323px;width:44px;height:13px;background:rgb(226,125,125)"></div><div class="t" style="right:572px;top:323px;font-size:11px;color:#000;font-weight:400;text-align:right;">21</div><div style="position:absolute;left:760px;top:323px;width:44px;height:13px;background:rgb(236,107,107)"></div><div class="t" style="right:526px;top:323px;font-size:11px;color:#000;font-weight:400;text-align:right;">26</div><div style="position:absolute;left:806px;top:323px;width:44px;height:13px;background:rgb(234,111,111)"></div><div class="t" style="right:480px;top:323px;font-size:11px;color:#000;font-weight:400;text-align:right;">25</div><div style="position:absolute;left:852px;top:323px;width:44px;height:13px;background:rgb(230,118,118)"></div><div class="t" style="right:434px;top:323px;font-size:11px;color:#000;font-weight:400;text-align:right;">23</div><div style="position:absolute;left:898px;top:323px;width:44px;height:13px;background:rgb(226,125,125)"></div><div class="t" style="right:388px;top:323px;font-size:11px;color:#000;font-weight:400;text-align:right;">21</div><div style="position:absolute;left:944px;top:323px;width:44px;height:13px;background:rgb(224,129,129)"></div><div class="t" style="right:342px;top:323px;font-size:11px;color:#000;font-weight:400;text-align:right;">20</div><div style="position:absolute;left:990px;top:323px;width:44px;height:13px;background:rgb(217,140,140)"></div><div class="t" style="right:296px;top:323px;font-size:11px;color:#000;font-weight:400;text-align:right;">17</div><div style="position:absolute;left:1036px;top:323px;width:44px;height:13px;background:rgb(213,147,147)"></div><div class="t" style="right:250px;top:323px;font-size:11px;color:#000;font-weight:400;text-align:right;">15</div><div style="position:absolute;left:1082px;top:323px;width:44px;height:13px;background:rgb(211,151,151)"></div><div class="t" style="right:204px;top:323px;font-size:11px;color:#000;font-weight:400;text-align:right;">14</div><div style="position:absolute;left:1128px;top:323px;width:44px;height:13px;background:rgb(211,151,151)"></div><div class="t" style="right:158px;top:323px;font-size:11px;color:#000;font-weight:400;text-align:right;">14</div><div style="position:absolute;left:1174px;top:323px;width:44px;height:13px;background:rgb(211,151,151)"></div><div class="t" style="right:112px;top:323px;font-size:11px;color:#000;font-weight:400;text-align:right;">14</div><div style="position:absolute;left:621px;top:337px;width:45px;height:14px;background:#f0f0f0;border:1px solid #a0a0a0;box-shadow:inset 1px 1px #fff"></div><div class="t" style="right:666px;top:338px;font-size:11px;color:#000;font-weight:400;text-align:right;">2000</div><div style="position:absolute;left:668px;top:338px;width:44px;height:13px;background:rgb(228,122,122)"></div><div class="t" style="right:618px;top:338px;font-size:11px;color:#000;font-weight:400;text-align:right;">22</div><div style="position:absolute;left:714px;top:338px;width:44px;height:13px;background:rgb(236,107,107)"></div><div class="t" style="right:572px;top:338px;font-size:11px;color:#000;font-weight:400;text-align:right;">26</div><div style="position:absolute;left:760px;top:338px;width:44px;height:13px;background:rgb(244,93,93)"></div><div class="t" style="right:526px;top:338px;font-size:11px;color:#000;font-weight:400;text-align:right;">30</div><div style="position:absolute;left:806px;top:338px;width:44px;height:13px;background:rgb(240,100,100)"></div><div class="t" style="right:480px;top:338px;font-size:11px;color:#000;font-weight:400;text-align:right;">28</div><div style="position:absolute;left:852px;top:338px;width:44px;height:13px;background:rgb(236,107,107)"></div><div class="t" style="right:434px;top:338px;font-size:11px;color:#000;font-weight:400;text-align:right;">26</div><div style="position:absolute;left:898px;top:338px;width:44px;height:13px;background:rgb(232,115,115)"></div><div class="t" style="right:388px;top:338px;font-size:11px;color:#000;font-weight:400;text-align:right;">24</div><div style="position:absolute;left:944px;top:338px;width:44px;height:13px;background:rgb(230,118,118)"></div><div class="t" style="right:342px;top:338px;font-size:11px;color:#000;font-weight:400;text-align:right;">23</div><div style="position:absolute;left:990px;top:338px;width:44px;height:13px;background:rgb(226,125,125)"></div><div class="t" style="right:296px;top:338px;font-size:11px;color:#000;font-weight:400;text-align:right;">21</div><div style="position:absolute;left:1036px;top:338px;width:44px;height:13px;background:rgb(224,129,129)"></div><div class="t" style="right:250px;top:338px;font-size:11px;color:#000;font-weight:400;text-align:right;">20</div><div style="position:absolute;left:1082px;top:338px;width:44px;height:13px;background:rgb(221,133,133)"></div><div class="t" style="right:204px;top:338px;font-size:11px;color:#000;font-weight:400;text-align:right;">19</div><div style="position:absolute;left:1128px;top:338px;width:44px;height:13px;background:rgb(221,133,133)"></div><div class="t" style="right:158px;top:338px;font-size:11px;color:#000;font-weight:400;text-align:right;">19</div><div style="position:absolute;left:1174px;top:338px;width:44px;height:13px;background:rgb(221,133,133)"></div><div class="t" style="right:112px;top:338px;font-size:11px;color:#000;font-weight:400;text-align:right;">19</div><div style="position:absolute;left:621px;top:352px;width:45px;height:14px;background:#f0f0f0;border:1px solid #a0a0a0;box-shadow:inset 1px 1px #fff"></div><div class="t" style="right:666px;top:353px;font-size:11px;color:#000;font-weight:400;text-align:right;">2200</div><div style="position:absolute;left:668px;top:353px;width:44px;height:13px;background:rgb(230,118,118)"></div><div class="t" style="right:618px;top:353px;font-size:11px;color:#000;font-weight:400;text-align:right;">23</div><div style="position:absolute;left:714px;top:353px;width:44px;height:13px;background:rgb(238,104,104)"></div><div class="t" style="right:572px;top:353px;font-size:11px;color:#000;font-weight:400;text-align:right;">27</div><div style="position:absolute;left:760px;top:353px;width:44px;height:13px;background:rgb(249,86,86)"></div><div class="t" style="right:526px;top:353px;font-size:11px;color:#000;font-weight:400;text-align:right;">32</div><div style="position:absolute;left:806px;top:353px;width:44px;height:13px;background:rgb(244,93,93)"></div><div class="t" style="right:480px;top:353px;font-size:11px;color:#000;font-weight:400;text-align:right;">30</div><div style="position:absolute;left:852px;top:353px;width:44px;height:13px;background:rgb(240,100,100)"></div><div class="t" style="right:434px;top:353px;font-size:11px;color:#000;font-weight:400;text-align:right;">28</div><div style="position:absolute;left:898px;top:353px;width:44px;height:13px;background:rgb(236,107,107)"></div><div class="t" style="right:388px;top:353px;font-size:11px;color:#000;font-weight:400;text-align:right;">26</div><div style="position:absolute;left:944px;top:353px;width:44px;height:13px;background:rgb(232,115,115)"></div><div class="t" style="right:342px;top:353px;font-size:11px;color:#000;font-weight:400;text-align:right;">24</div><div style="position:absolute;left:990px;top:353px;width:44px;height:13px;background:rgb(226,125,125)"></div><div class="t" style="right:296px;top:353px;font-size:11px;color:#000;font-weight:400;text-align:right;">21</div><div style="position:absolute;left:1036px;top:353px;width:44px;height:13px;background:rgb(224,129,129)"></div><div class="t" style="right:250px;top:353px;font-size:11px;color:#000;font-weight:400;text-align:right;">20</div><div style="position:absolute;left:1082px;top:353px;width:44px;height:13px;background:rgb(221,133,133)"></div><div class="t" style="right:204px;top:353px;font-size:11px;color:#000;font-weight:400;text-align:right;">19</div><div style="position:absolute;left:1128px;top:353px;width:44px;height:13px;background:rgb(221,133,133)"></div><div class="t" style="right:158px;top:353px;font-size:11px;color:#000;font-weight:400;text-align:right;">19</div><div style="position:absolute;left:1174px;top:353px;width:44px;height:13px;background:rgb(221,133,133)"></div><div class="t" style="right:112px;top:353px;font-size:11px;color:#000;font-weight:400;text-align:right;">19</div><div style="position:absolute;left:621px;top:367px;width:45px;height:14px;background:#f0f0f0;border:1px solid #a0a0a0;box-shadow:inset 1px 1px #fff"></div><div class="t" style="right:666px;top:368px;font-size:11px;color:#000;font-weight:400;text-align:right;">2480</div><div style="position:absolute;left:668px;top:368px;width:44px;height:13px;background:rgb(232,115,115)"></div><div class="t" style="right:618px;top:368px;font-size:11px;color:#000;font-weight:400;text-align:right;">24</div><div style="position:absolute;left:714px;top:368px;width:44px;height:13px;background:rgb(242,97,97)"></div><div class="t" style="right:572px;top:368px;font-size:11px;color:#000;font-weight:400;text-align:right;">29</div><div style="position:absolute;left:760px;top:368px;width:44px;height:13px;background:rgb(251,82,82)"></div><div class="t" style="right:526px;top:368px;font-size:11px;color:#000;font-weight:400;text-align:right;">33</div><div style="position:absolute;left:806px;top:368px;width:44px;height:13px;background:rgb(249,86,86)"></div><div class="t" style="right:480px;top:368px;font-size:11px;color:#000;font-weight:400;text-align:right;">32</div><div style="position:absolute;left:852px;top:368px;width:44px;height:13px;background:rgb(244,93,93)"></div><div class="t" style="right:434px;top:368px;font-size:11px;color:#000;font-weight:400;text-align:right;">30</div><div style="position:absolute;left:898px;top:368px;width:44px;height:13px;background:rgb(240,100,100)"></div><div class="t" style="right:388px;top:368px;font-size:11px;color:#000;font-weight:400;text-align:right;">28</div><div style="position:absolute;left:944px;top:368px;width:44px;height:13px;background:rgb(236,107,107)"></div><div class="t" style="right:342px;top:368px;font-size:11px;color:#000;font-weight:400;text-align:right;">26</div><div style="position:absolute;left:990px;top:368px;width:44px;height:13px;background:rgb(232,115,115)"></div><div class="t" style="right:296px;top:368px;font-size:11px;color:#000;font-weight:400;text-align:right;">24</div><div style="position:absolute;left:1036px;top:368px;width:44px;height:13px;background:rgb(228,122,122)"></div><div class="t" style="right:250px;top:368px;font-size:11px;color:#000;font-weight:400;text-align:right;">22</div><div style="position:absolute;left:1082px;top:368px;width:44px;height:13px;background:rgb(226,125,125)"></div><div class="t" style="right:204px;top:368px;font-size:11px;color:#000;font-weight:400;text-align:right;">21</div><div style="position:absolute;left:1128px;top:368px;width:44px;height:13px;background:rgb(226,125,125)"></div><div class="t" style="right:158px;top:368px;font-size:11px;color:#000;font-weight:400;text-align:right;">21</div><div style="position:absolute;left:1174px;top:368px;width:44px;height:13px;background:rgb(226,125,125)"></div><div class="t" style="right:112px;top:368px;font-size:11px;color:#000;font-weight:400;text-align:right;">21</div><div style="position:absolute;left:621px;top:382px;width:45px;height:14px;background:#f0f0f0;border:1px solid #a0a0a0;box-shadow:inset 1px 1px #fff"></div><div class="t" style="right:666px;top:383px;font-size:11px;color:#000;font-weight:400;text-align:right;">2920</div><div style="position:absolute;left:668px;top:383px;width:44px;height:13px;background:rgb(150,255,255)"></div><div class="t" style="right:618px;top:383px;font-size:11px;color:#000;font-weight:400;text-align:right;">-15</div><div style="position:absolute;left:714px;top:383px;width:44px;height:13px;background:rgb(244,93,93)"></div><div class="t" style="right:572px;top:383px;font-size:11px;color:#000;font-weight:400;text-align:right;">30</div><div style="position:absolute;left:760px;top:383px;width:44px;height:13px;background:rgb(251,82,82)"></div><div class="t" style="right:526px;top:383px;font-size:11px;color:#000;font-weight:400;text-align:right;">33</div><div style="position:absolute;left:806px;top:383px;width:44px;height:13px;background:rgb(253,79,79)"></div><div class="t" style="right:480px;top:383px;font-size:11px;color:#000;font-weight:400;text-align:right;">34</div><div style="position:absolute;left:852px;top:383px;width:44px;height:13px;background:rgb(249,86,86)"></div><div class="t" style="right:434px;top:383px;font-size:11px;color:#000;font-weight:400;text-align:right;">32</div><div style="position:absolute;left:898px;top:383px;width:44px;height:13px;background:rgb(244,93,93)"></div><div class="t" style="right:388px;top:383px;font-size:11px;color:#000;font-weight:400;text-align:right;">30</div><div style="position:absolute;left:944px;top:383px;width:44px;height:13px;background:rgb(240,100,100)"></div><div class="t" style="right:342px;top:383px;font-size:11px;color:#000;font-weight:400;text-align:right;">28</div><div style="position:absolute;left:990px;top:383px;width:44px;height:13px;background:rgb(238,104,104)"></div><div class="t" style="right:296px;top:383px;font-size:11px;color:#000;font-weight:400;text-align:right;">27</div><div style="position:absolute;left:1036px;top:383px;width:44px;height:13px;background:rgb(236,107,107)"></div><div class="t" style="right:250px;top:383px;font-size:11px;color:#000;font-weight:400;text-align:right;">26</div><div style="position:absolute;left:1082px;top:383px;width:44px;height:13px;background:rgb(234,111,111)"></div><div class="t" style="right:204px;top:383px;font-size:11px;color:#000;font-weight:400;text-align:right;">25</div><div style="position:absolute;left:1128px;top:383px;width:44px;height:13px;background:rgb(232,115,115)"></div><div class="t" style="right:158px;top:383px;font-size:11px;color:#000;font-weight:400;text-align:right;">24</div><div style="position:absolute;left:1174px;top:383px;width:44px;height:13px;background:rgb(232,115,115)"></div><div class="t" style="right:112px;top:383px;font-size:11px;color:#000;font-weight:400;text-align:right;">24</div><div style="position:absolute;left:621px;top:397px;width:45px;height:14px;background:#f0f0f0;border:1px solid #a0a0a0;box-shadow:inset 1px 1px #fff"></div><div class="t" style="right:666px;top:398px;font-size:11px;color:#000;font-weight:400;text-align:right;">3280</div><div style="position:absolute;left:668px;top:398px;width:44px;height:13px;background:rgb(150,255,255)"></div><div class="t" style="right:618px;top:398px;font-size:11px;color:#000;font-weight:400;text-align:right;">-15</div><div style="position:absolute;left:714px;top:398px;width:44px;height:13px;background:rgb(244,93,93)"></div><div class="t" style="right:572px;top:398px;font-size:11px;color:#000;font-weight:400;text-align:right;">30</div><div style="position:absolute;left:760px;top:398px;width:44px;height:13px;background:rgb(255,75,75)"></div><div class="t" style="right:526px;top:398px;font-size:11px;color:#000;font-weight:400;text-align:right;">35</div><div style="position:absolute;left:806px;top:398px;width:44px;height:13px;background:rgb(255,75,75)"></div><div class="t" style="right:480px;top:398px;font-size:11px;color:#000;font-weight:400;text-align:right;">35</div><div style="position:absolute;left:852px;top:398px;width:44px;height:13px;background:rgb(251,82,82)"></div><div class="t" style="right:434px;top:398px;font-size:11px;color:#000;font-weight:400;text-align:right;">33</div><div style="position:absolute;left:898px;top:398px;width:44px;height:13px;background:rgb(249,86,86)"></div><div class="t" style="right:388px;top:398px;font-size:11px;color:#000;font-weight:400;text-align:right;">32</div><div style="position:absolute;left:944px;top:398px;width:44px;height:13px;background:rgb(244,93,93)"></div><div class="t" style="right:342px;top:398px;font-size:11px;color:#000;font-weight:400;text-align:right;">30</div><div style="position:absolute;left:990px;top:398px;width:44px;height:13px;background:rgb(240,100,100)"></div><div class="t" style="right:296px;top:398px;font-size:11px;color:#000;font-weight:400;text-align:right;">28</div><div style="position:absolute;left:1036px;top:398px;width:44px;height:13px;background:rgb(236,107,107)"></div><div class="t" style="right:250px;top:398px;font-size:11px;color:#000;font-weight:400;text-align:right;">26</div><div style="position:absolute;left:1082px;top:398px;width:44px;height:13px;background:rgb(234,111,111)"></div><div class="t" style="right:204px;top:398px;font-size:11px;color:#000;font-weight:400;text-align:right;">25</div><div style="position:absolute;left:1128px;top:398px;width:44px;height:13px;background:rgb(232,115,115)"></div><div class="t" style="right:158px;top:398px;font-size:11px;color:#000;font-weight:400;text-align:right;">24</div><div style="position:absolute;left:1174px;top:398px;width:44px;height:13px;background:rgb(232,115,115)"></div><div class="t" style="right:112px;top:398px;font-size:11px;color:#000;font-weight:400;text-align:right;">24</div><div style="position:absolute;left:621px;top:412px;width:45px;height:14px;background:#f0f0f0;border:1px solid #a0a0a0;box-shadow:inset 1px 1px #fff"></div><div class="t" style="right:666px;top:413px;font-size:11px;color:#000;font-weight:400;text-align:right;">3640</div><div style="position:absolute;left:668px;top:413px;width:44px;height:13px;background:rgb(150,255,255)"></div><div class="t" style="right:618px;top:413px;font-size:11px;color:#000;font-weight:400;text-align:right;">-15</div><div style="position:absolute;left:714px;top:413px;width:44px;height:13px;background:rgb(150,255,255)"></div><div class="t" style="right:572px;top:413px;font-size:11px;color:#000;font-weight:400;text-align:right;">-15</div><div style="position:absolute;left:760px;top:413px;width:44px;height:13px;background:rgb(150,255,255)"></div><div class="t" style="right:526px;top:413px;font-size:11px;color:#000;font-weight:400;text-align:right;">-15</div><div style="position:absolute;left:806px;top:413px;width:44px;height:13px;background:rgb(253,79,79)"></div><div class="t" style="right:480px;top:413px;font-size:11px;color:#000;font-weight:400;text-align:right;">34</div><div style="position:absolute;left:852px;top:413px;width:44px;height:13px;background:rgb(251,82,82)"></div><div class="t" style="right:434px;top:413px;font-size:11px;color:#000;font-weight:400;text-align:right;">33</div><div style="position:absolute;left:898px;top:413px;width:44px;height:13px;background:rgb(244,93,93)"></div><div class="t" style="right:388px;top:413px;font-size:11px;color:#000;font-weight:400;text-align:right;">30</div><div style="position:absolute;left:944px;top:413px;width:44px;height:13px;background:rgb(242,97,97)"></div><div class="t" style="right:342px;top:413px;font-size:11px;color:#000;font-weight:400;text-align:right;">29</div><div style="position:absolute;left:990px;top:413px;width:44px;height:13px;background:rgb(238,104,104)"></div><div class="t" style="right:296px;top:413px;font-size:11px;color:#000;font-weight:400;text-align:right;">27</div><div style="position:absolute;left:1036px;top:413px;width:44px;height:13px;background:rgb(234,111,111)"></div><div class="t" style="right:250px;top:413px;font-size:11px;color:#000;font-weight:400;text-align:right;">25</div><div style="position:absolute;left:1082px;top:413px;width:44px;height:13px;background:rgb(232,115,115)"></div><div class="t" style="right:204px;top:413px;font-size:11px;color:#000;font-weight:400;text-align:right;">24</div><div style="position:absolute;left:1128px;top:413px;width:44px;height:13px;background:rgb(230,118,118)"></div><div class="t" style="right:158px;top:413px;font-size:11px;color:#000;font-weight:400;text-align:right;">23</div><div style="position:absolute;left:1174px;top:413px;width:44px;height:13px;background:rgb(230,118,118)"></div><div class="t" style="right:112px;top:413px;font-size:11px;color:#000;font-weight:400;text-align:right;">23</div><div style="position:absolute;left:621px;top:427px;width:45px;height:14px;background:#f0f0f0;border:1px solid #a0a0a0;box-shadow:inset 1px 1px #fff"></div><div class="t" style="right:666px;top:428px;font-size:11px;color:#000;font-weight:400;text-align:right;">4000</div><div style="position:absolute;left:668px;top:428px;width:44px;height:13px;background:rgb(150,255,255)"></div><div class="t" style="right:618px;top:428px;font-size:11px;color:#000;font-weight:400;text-align:right;">-15</div><div style="position:absolute;left:714px;top:428px;width:44px;height:13px;background:rgb(150,255,255)"></div><div class="t" style="right:572px;top:428px;font-size:11px;color:#000;font-weight:400;text-align:right;">-15</div><div style="position:absolute;left:760px;top:428px;width:44px;height:13px;background:rgb(150,255,255)"></div><div class="t" style="right:526px;top:428px;font-size:11px;color:#000;font-weight:400;text-align:right;">-15</div><div style="position:absolute;left:806px;top:428px;width:44px;height:13px;background:rgb(255,75,75)"></div><div class="t" style="right:480px;top:428px;font-size:11px;color:#000;font-weight:400;text-align:right;">35</div><div style="position:absolute;left:852px;top:428px;width:44px;height:13px;background:rgb(251,82,82)"></div><div class="t" style="right:434px;top:428px;font-size:11px;color:#000;font-weight:400;text-align:right;">33</div><div style="position:absolute;left:898px;top:428px;width:44px;height:13px;background:rgb(249,86,86)"></div><div class="t" style="right:388px;top:428px;font-size:11px;color:#000;font-weight:400;text-align:right;">32</div><div style="position:absolute;left:944px;top:428px;width:44px;height:13px;background:rgb(244,93,93)"></div><div class="t" style="right:342px;top:428px;font-size:11px;color:#000;font-weight:400;text-align:right;">30</div><div style="position:absolute;left:990px;top:428px;width:44px;height:13px;background:rgb(242,97,97)"></div><div class="t" style="right:296px;top:428px;font-size:11px;color:#000;font-weight:400;text-align:right;">29</div><div style="position:absolute;left:1036px;top:428px;width:44px;height:13px;background:rgb(234,111,111)"></div><div class="t" style="right:250px;top:428px;font-size:11px;color:#000;font-weight:400;text-align:right;">25</div><div style="position:absolute;left:1082px;top:428px;width:44px;height:13px;background:rgb(232,115,115)"></div><div class="t" style="right:204px;top:428px;font-size:11px;color:#000;font-weight:400;text-align:right;">24</div><div style="position:absolute;left:1128px;top:428px;width:44px;height:13px;background:rgb(230,118,118)"></div><div class="t" style="right:158px;top:428px;font-size:11px;color:#000;font-weight:400;text-align:right;">23</div><div style="position:absolute;left:1174px;top:428px;width:44px;height:13px;background:rgb(230,118,118)"></div><div class="t" style="right:112px;top:428px;font-size:11px;color:#000;font-weight:400;text-align:right;">23</div><div style="position:absolute;left:621px;top:442px;width:45px;height:14px;background:#f0f0f0;border:1px solid #a0a0a0;box-shadow:inset 1px 1px #fff"></div><div class="t" style="right:666px;top:443px;font-size:11px;color:#000;font-weight:400;text-align:right;">4600</div><div style="position:absolute;left:668px;top:443px;width:44px;height:13px;background:rgb(150,255,255)"></div><div class="t" style="right:618px;top:443px;font-size:11px;color:#000;font-weight:400;text-align:right;">-15</div><div style="position:absolute;left:714px;top:443px;width:44px;height:13px;background:rgb(150,255,255)"></div><div class="t" style="right:572px;top:443px;font-size:11px;color:#000;font-weight:400;text-align:right;">-15</div><div style="position:absolute;left:760px;top:443px;width:44px;height:13px;background:rgb(150,255,255)"></div><div class="t" style="right:526px;top:443px;font-size:11px;color:#000;font-weight:400;text-align:right;">-15</div><div style="position:absolute;left:806px;top:443px;width:44px;height:13px;background:rgb(255,75,75)"></div><div class="t" style="right:480px;top:443px;font-size:11px;color:#000;font-weight:400;text-align:right;">35</div><div style="position:absolute;left:852px;top:443px;width:44px;height:13px;background:rgb(251,82,82)"></div><div class="t" style="right:434px;top:443px;font-size:11px;color:#000;font-weight:400;text-align:right;">33</div><div style="position:absolute;left:898px;top:443px;width:44px;height:13px;background:rgb(244,93,93)"></div><div class="t" style="right:388px;top:443px;font-size:11px;color:#000;font-weight:400;text-align:right;">30</div><div style="position:absolute;left:944px;top:443px;width:44px;height:13px;background:rgb(232,115,115)"></div><div class="t" style="right:342px;top:443px;font-size:11px;color:#000;font-weight:400;text-align:right;">24</div><div style="position:absolute;left:990px;top:443px;width:44px;height:13px;background:rgb(228,122,122)"></div><div class="t" style="right:296px;top:443px;font-size:11px;color:#000;font-weight:400;text-align:right;">22</div><div style="position:absolute;left:1036px;top:443px;width:44px;height:13px;background:rgb(226,125,125)"></div><div class="t" style="right:250px;top:443px;font-size:11px;color:#000;font-weight:400;text-align:right;">21</div><div style="position:absolute;left:1082px;top:443px;width:44px;height:13px;background:rgb(224,129,129)"></div><div class="t" style="right:204px;top:443px;font-size:11px;color:#000;font-weight:400;text-align:right;">20</div><div style="position:absolute;left:1128px;top:443px;width:44px;height:13px;background:rgb(224,129,129)"></div><div class="t" style="right:158px;top:443px;font-size:11px;color:#000;font-weight:400;text-align:right;">20</div><div style="position:absolute;left:1174px;top:443px;width:44px;height:13px;background:rgb(221,133,133)"></div><div class="t" style="right:112px;top:443px;font-size:11px;color:#000;font-weight:400;text-align:right;">19</div><div style="position:absolute;left:621px;top:457px;width:45px;height:14px;background:#f0f0f0;border:1px solid #a0a0a0;box-shadow:inset 1px 1px #fff"></div><div class="t" style="right:666px;top:458px;font-size:11px;color:#000;font-weight:400;text-align:right;">5320</div><div style="position:absolute;left:668px;top:458px;width:44px;height:13px;background:rgb(150,255,255)"></div><div class="t" style="right:618px;top:458px;font-size:11px;color:#000;font-weight:400;text-align:right;">-15</div><div style="position:absolute;left:714px;top:458px;width:44px;height:13px;background:rgb(150,255,255)"></div><div class="t" style="right:572px;top:458px;font-size:11px;color:#000;font-weight:400;text-align:right;">-15</div><div style="position:absolute;left:760px;top:458px;width:44px;height:13px;background:rgb(150,255,255)"></div><div class="t" style="right:526px;top:458px;font-size:11px;color:#000;font-weight:400;text-align:right;">-15</div><div style="position:absolute;left:806px;top:458px;width:44px;height:13px;background:rgb(253,79,79)"></div><div class="t" style="right:480px;top:458px;font-size:11px;color:#000;font-weight:400;text-align:right;">34</div><div style="position:absolute;left:852px;top:458px;width:44px;height:13px;background:rgb(247,89,89)"></div><div class="t" style="right:434px;top:458px;font-size:11px;color:#000;font-weight:400;text-align:right;">31</div><div style="position:absolute;left:898px;top:458px;width:44px;height:13px;background:rgb(244,93,93)"></div><div class="t" style="right:388px;top:458px;font-size:11px;color:#000;font-weight:400;text-align:right;">30</div><div style="position:absolute;left:944px;top:458px;width:44px;height:13px;background:rgb(234,111,111)"></div><div class="t" style="right:342px;top:458px;font-size:11px;color:#000;font-weight:400;text-align:right;">25</div><div style="position:absolute;left:990px;top:458px;width:44px;height:13px;background:rgb(226,125,125)"></div><div class="t" style="right:296px;top:458px;font-size:11px;color:#000;font-weight:400;text-align:right;">21</div><div style="position:absolute;left:1036px;top:458px;width:44px;height:13px;background:rgb(224,129,129)"></div><div class="t" style="right:250px;top:458px;font-size:11px;color:#000;font-weight:400;text-align:right;">20</div><div style="position:absolute;left:1082px;top:458px;width:44px;height:13px;background:rgb(219,136,136)"></div><div class="t" style="right:204px;top:458px;font-size:11px;color:#000;font-weight:400;text-align:right;">18</div><div style="position:absolute;left:1128px;top:458px;width:44px;height:13px;background:rgb(219,136,136)"></div><div class="t" style="right:158px;top:458px;font-size:11px;color:#000;font-weight:400;text-align:right;">18</div><div style="position:absolute;left:1174px;top:458px;width:44px;height:13px;background:rgb(219,136,136)"></div><div class="t" style="right:112px;top:458px;font-size:11px;color:#000;font-weight:400;text-align:right;">18</div><div style="position:absolute;left:621px;top:472px;width:45px;height:14px;background:#f0f0f0;border:1px solid #a0a0a0;box-shadow:inset 1px 1px #fff"></div><div class="t" style="right:666px;top:473px;font-size:11px;color:#000;font-weight:400;text-align:right;">6080</div><div style="position:absolute;left:668px;top:473px;width:44px;height:13px;background:rgb(150,255,255)"></div><div class="t" style="right:618px;top:473px;font-size:11px;color:#000;font-weight:400;text-align:right;">-15</div><div style="position:absolute;left:714px;top:473px;width:44px;height:13px;background:rgb(150,255,255)"></div><div class="t" style="right:572px;top:473px;font-size:11px;color:#000;font-weight:400;text-align:right;">-15</div><div style="position:absolute;left:760px;top:473px;width:44px;height:13px;background:rgb(150,255,255)"></div><div class="t" style="right:526px;top:473px;font-size:11px;color:#000;font-weight:400;text-align:right;">-15</div><div style="position:absolute;left:806px;top:473px;width:44px;height:13px;background:rgb(253,79,79)"></div><div class="t" style="right:480px;top:473px;font-size:11px;color:#000;font-weight:400;text-align:right;">34</div><div style="position:absolute;left:852px;top:473px;width:44px;height:13px;background:rgb(247,89,89)"></div><div class="t" style="right:434px;top:473px;font-size:11px;color:#000;font-weight:400;text-align:right;">31</div><div style="position:absolute;left:898px;top:473px;width:44px;height:13px;background:rgb(244,93,93)"></div><div class="t" style="right:388px;top:473px;font-size:11px;color:#000;font-weight:400;text-align:right;">30</div><div style="position:absolute;left:944px;top:473px;width:44px;height:13px;background:rgb(236,107,107)"></div><div class="t" style="right:342px;top:473px;font-size:11px;color:#000;font-weight:400;text-align:right;">26</div><div style="position:absolute;left:990px;top:473px;width:44px;height:13px;background:rgb(226,125,125)"></div><div class="t" style="right:296px;top:473px;font-size:11px;color:#000;font-weight:400;text-align:right;">21</div><div style="position:absolute;left:1036px;top:473px;width:44px;height:13px;background:rgb(224,129,129)"></div><div class="t" style="right:250px;top:473px;font-size:11px;color:#000;font-weight:400;text-align:right;">20</div><div style="position:absolute;left:1082px;top:473px;width:44px;height:13px;background:rgb(219,136,136)"></div><div class="t" style="right:204px;top:473px;font-size:11px;color:#000;font-weight:400;text-align:right;">18</div><div style="position:absolute;left:1128px;top:473px;width:44px;height:13px;background:rgb(219,136,136)"></div><div class="t" style="right:158px;top:473px;font-size:11px;color:#000;font-weight:400;text-align:right;">18</div><div style="position:absolute;left:1174px;top:473px;width:44px;height:13px;background:rgb(219,136,136)"></div><div class="t" style="right:112px;top:473px;font-size:11px;color:#000;font-weight:400;text-align:right;">18</div><div style="position:absolute;left:621px;top:487px;width:45px;height:14px;background:#f0f0f0;border:1px solid #a0a0a0;box-shadow:inset 1px 1px #fff"></div><div class="t" style="right:666px;top:488px;font-size:11px;color:#000;font-weight:400;text-align:right;">6400</div><div style="position:absolute;left:668px;top:488px;width:44px;height:13px;background:rgb(150,255,255)"></div><div class="t" style="right:618px;top:488px;font-size:11px;color:#000;font-weight:400;text-align:right;">-15</div><div style="position:absolute;left:714px;top:488px;width:44px;height:13px;background:rgb(150,255,255)"></div><div class="t" style="right:572px;top:488px;font-size:11px;color:#000;font-weight:400;text-align:right;">-15</div><div style="position:absolute;left:760px;top:488px;width:44px;height:13px;background:rgb(150,255,255)"></div><div class="t" style="right:526px;top:488px;font-size:11px;color:#000;font-weight:400;text-align:right;">-15</div><div style="position:absolute;left:806px;top:488px;width:44px;height:13px;background:rgb(253,79,79)"></div><div class="t" style="right:480px;top:488px;font-size:11px;color:#000;font-weight:400;text-align:right;">34</div><div style="position:absolute;left:852px;top:488px;width:44px;height:13px;background:rgb(247,89,89)"></div><div class="t" style="right:434px;top:488px;font-size:11px;color:#000;font-weight:400;text-align:right;">31</div><div style="position:absolute;left:898px;top:488px;width:44px;height:13px;background:rgb(244,93,93)"></div><div class="t" style="right:388px;top:488px;font-size:11px;color:#000;font-weight:400;text-align:right;">30</div><div style="position:absolute;left:944px;top:488px;width:44px;height:13px;background:rgb(234,111,111)"></div><div class="t" style="right:342px;top:488px;font-size:11px;color:#000;font-weight:400;text-align:right;">25</div><div style="position:absolute;left:990px;top:488px;width:44px;height:13px;background:rgb(230,118,118)"></div><div class="t" style="right:296px;top:488px;font-size:11px;color:#000;font-weight:400;text-align:right;">23</div><div style="position:absolute;left:1036px;top:488px;width:44px;height:13px;background:rgb(228,122,122)"></div><div class="t" style="right:250px;top:488px;font-size:11px;color:#000;font-weight:400;text-align:right;">22</div><div style="position:absolute;left:1082px;top:488px;width:44px;height:13px;background:rgb(226,125,125)"></div><div class="t" style="right:204px;top:488px;font-size:11px;color:#000;font-weight:400;text-align:right;">21</div><div style="position:absolute;left:1128px;top:488px;width:44px;height:13px;background:rgb(219,136,136)"></div><div class="t" style="right:158px;top:488px;font-size:11px;color:#000;font-weight:400;text-align:right;">18</div><div style="position:absolute;left:1174px;top:488px;width:44px;height:13px;background:rgb(219,136,136)"></div><div class="t" style="right:112px;top:488px;font-size:11px;color:#000;font-weight:400;text-align:right;">18</div><div style="position:absolute;left:619px;top:535px;width:629px;height:23px;background:#f0f0f0;border-top:1px solid #d8d8d8"></div><div style="position:absolute;left:693px;top:537px;width:1px;height:19px;background:#d7d7d7"></div><svg style="position:absolute;left:1237px;top:547px;" width="10" height="10" viewBox="0 0 10 10"><rect x="8" y="0" width="2" height="2" fill="#a0a0a0"/><rect x="5" y="3" width="2" height="2" fill="#a0a0a0"/><rect x="8" y="3" width="2" height="2" fill="#a0a0a0"/><rect x="2" y="6" width="2" height="2" fill="#a0a0a0"/><rect x="5" y="6" width="2" height="2" fill="#a0a0a0"/><rect x="8" y="6" width="2" height="2" fill="#a0a0a0"/></svg><div style="position:absolute;left:535px;top:598px;width:277px;height:168px;background:linear-gradient(#bccde0 0px,#cbd9e9 16px,#d7e4f2 30px,#d7e4f2 100%);border:1px solid #555555;border-radius:5px 5px 0 0"></div><div style="position:absolute;left:536px;top:599px;width:275px;height:166px;border-top:1px solid #e6ecf6;border-left:1px solid #e6ecf6;border-right:1px solid #eef2fa;border-bottom:1px solid #eef2fa;border-radius:4px 4px 0 0"></div><svg style="position:absolute;left:545px;top:611px;shape-rendering:crispEdges" width="16" height="12" viewBox="0 0 16 12"><rect x="0" y="2" width="16" height="8" fill="#000"/><rect x="1.5" y="0" width="1.6" height="2" fill="#000"/><rect x="1.5" y="10" width="1.6" height="2" fill="#000"/><rect x="4.5" y="0" width="1.6" height="2" fill="#000"/><rect x="4.5" y="10" width="1.6" height="2" fill="#000"/><rect x="7.5" y="0" width="1.6" height="2" fill="#000"/><rect x="7.5" y="10" width="1.6" height="2" fill="#000"/><rect x="10.5" y="0" width="1.6" height="2" fill="#000"/><rect x="10.5" y="10" width="1.6" height="2" fill="#000"/><rect x="13.5" y="0" width="1.6" height="2" fill="#000"/><rect x="13.5" y="10" width="1.6" height="2" fill="#000"/></svg><div class="t" style="left:565px;top:611px;font-size:12px;color:#a0a6ac;font-weight:400;-webkit-text-stroke:0;transform-origin:0 0;transform:scaleX(0.9110);">0xDC79</div><div class="t" style="left:617.4px;top:611px;font-size:12px;color:#a0a6ac;font-weight:400;-webkit-text-stroke:0;transform-origin:0 0;transform:scaleX(0.9377);">Fuel restore (1x4)</div><div style="position:absolute;left:770px;top:608px;width:32px;height:18px;background:linear-gradient(#e8eef6,#d4dde8);border:1px solid #7a8aa0;border-radius:3px;box-shadow:inset 0 0 0 1px rgba(255,255,255,0.6)"></div><svg style="position:absolute;left:780px;top:612px;" width="12" height="10" viewBox="0 0 12 10"><path d="M2.5 2l7 6M9.5 2l-7 6" stroke="#505860" stroke-width="4" stroke-linecap="round"/><path d="M2.5 2l7 6M9.5 2l-7 6" stroke="#f0f0f0" stroke-width="2.2" stroke-linecap="round"/></svg><div style="position:absolute;left:543px;top:629px;width:261px;height:26px;background:#f0f0f0"></div><div style="position:absolute;left:545px;top:631px;width:2px;height:20px;background:#fff"></div><div style="position:absolute;left:547px;top:631px;width:1px;height:20px;background:#a0a0a0"></div><div style="position:absolute;left:545px;top:651px;width:3px;height:1px;background:#a0a0a0"></div><svg style="position:absolute;left:556px;top:635px" width="14" height="14"><use href="#isave"/></svg><svg style="position:absolute;left:580px;top:636px" width="12" height="13"><use href="#ix"/></svg><svg style="position:absolute;left:602px;top:636px" width="15" height="13"><use href="#igraph"/></svg><svg style="position:absolute;left:625px;top:634px" width="17" height="15"><use href="#iscale"/></svg><svg style="position:absolute;left:648px;top:634px" width="25" height="15"><use href="#itri"/></svg><svg style="position:absolute;left:680px;top:635px" width="16" height="14"><use href="#igx"/></svg><svg style="position:absolute;left:703px;top:635px" width="16" height="14"><use href="#igy"/></svg><svg style="position:absolute;left:728px;top:635px" width="12" height="13"><use href="#iga"/></svg><div style="position:absolute;left:543px;top:655px;width:261px;height:24px;background:#f0f0f0"></div><div style="position:absolute;left:545px;top:657px;width:2px;height:20px;background:#fff"></div><div style="position:absolute;left:547px;top:657px;width:1px;height:20px;background:#a0a0a0"></div><div style="position:absolute;left:545px;top:677px;width:3px;height:1px;background:#a0a0a0"></div><div class="t" style="left:557px;top:660px;font-size:12px;color:#000;font-weight:400;;transform-origin:0 0;transform:scaleX(0.8975);">Function:</div><div style="position:absolute;left:606px;top:657px;width:104px;height:20px;background:#fdfdfd;border:1px solid #d9d9d9;border-bottom-color:#bcbcbc"></div><div class="t" style="left:609px;top:661px;font-size:12px;color:#000;font-weight:400;;transform-origin:0 0;transform:scaleX(1.0092);">Offset (+/-)</div><svg style="position:absolute;left:696px;top:665px;" width="9" height="6" viewBox="0 0 9 6"><path d="M0.5 0.5l4 4 4-4" fill="none" stroke="#404040" stroke-width="1"/></svg><div class="t" style="left:718.4px;top:660px;font-size:12px;color:#000;font-weight:400;;transform-origin:0 0;transform:scaleX(0.8811);">Value:</div><div style="position:absolute;left:750px;top:657px;width:46px;height:20px;background:#fff;border-bottom:1px solid #7a7a7a"></div><div class="t" style="left:753px;top:661px;font-size:12px;color:#000;font-weight:400;;">1.0</div><div style="position:absolute;left:800px;top:658px;width:4px;height:19px;background:#fdfdfd;border:1px solid #d0d0d0;border-right:none"></div><div style="position:absolute;left:543px;top:679px;width:261px;height:56px;border-top:1px solid #a0a0a0;border-left:1px solid #a0a0a0;border-right:1px solid #fff;border-bottom:1px solid #fff"></div><div style="position:absolute;left:544px;top:680px;width:259px;height:54px;border-top:1px solid #696969;border-left:1px solid #696969;border-right:1px solid #e3e3e3;border-bottom:1px solid #e3e3e3"></div><div style="position:absolute;left:545px;top:681px;width:257px;height:52px;background:#404040"></div><div style="position:absolute;left:545px;top:681px;width:257px;height:15px;background:#f0f0f0;border:1px solid #a0a0a0;box-shadow:inset 1px 1px #fff"></div><div class="t" style="left:590.8px;top:683px;font-size:11px;color:#000;font-weight:700;-webkit-text-stroke:0;transform-origin:0 0;transform:scaleX(1.0902);">0xDC79</div><div class="t" style="left:651.0px;top:683px;font-size:11px;color:#000;font-weight:700;-webkit-text-stroke:0;transform-origin:0 0;transform:scaleX(1.1439);">Fuel restore (1x4)</div><div style="position:absolute;left:545px;top:696px;width:230px;height:31px;background:#fff"></div><div style="position:absolute;left:591px;top:712px;width:184px;height:15px;background:#dcdfdf"></div><div style="position:absolute;left:545px;top:712px;width:46px;height:15px;background:#fff"></div><div style="position:absolute;left:545px;top:697px;width:45px;height:14px;background:#f0f0f0;border:1px solid #a0a0a0;box-shadow:inset 1px 1px #fff"></div><div style="position:absolute;left:591px;top:697px;width:45px;height:14px;background:#dcdcdc;border:1px solid #a0a0a0;box-shadow:inset 1px 1px #fff"></div><div class="t" style="left:591.5px;width:45px;top:699px;font-size:11px;color:#000;font-weight:400;text-align:center;">-37.00</div><div style="position:absolute;left:637px;top:697px;width:45px;height:14px;background:#f0f0f0;border:1px solid #a0a0a0;box-shadow:inset 1px 1px #fff"></div><div class="t" style="left:637.5px;width:45px;top:699px;font-size:11px;color:#000;font-weight:400;text-align:center;">-10.00</div><div style="position:absolute;left:683px;top:697px;width:45px;height:14px;background:#f0f0f0;border:1px solid #a0a0a0;box-shadow:inset 1px 1px #fff"></div><div class="t" style="left:683.5px;width:45px;top:699px;font-size:11px;color:#000;font-weight:400;text-align:center;">30.00</div><div style="position:absolute;left:729px;top:697px;width:45px;height:14px;background:#f0f0f0;border:1px solid #a0a0a0;box-shadow:inset 1px 1px #fff"></div><div class="t" style="left:729.5px;width:45px;top:699px;font-size:11px;color:#000;font-weight:400;text-align:center;">90.00</div><div style="position:absolute;left:545px;top:712px;width:45px;height:14px;background:#dcdcdc;border:1px solid #a0a0a0;box-shadow:inset 1px 1px #fff"></div><div style="position:absolute;left:591px;top:712px;width:46px;height:15px;background:rgb(168,213,213);border:1px solid #000"></div><div class="t" style="right:694px;top:713px;font-size:11px;color:#000;font-weight:400;text-align:right;">1600.00</div><div style="position:absolute;left:638px;top:713px;width:44px;height:13px;background:rgb(150,255,255)"></div><div class="t" style="right:648px;top:713px;font-size:11px;color:#000;font-weight:400;text-align:right;">1360.00</div><div style="position:absolute;left:684px;top:713px;width:44px;height:13px;background:rgb(255,75,75)"></div><div class="t" style="right:602px;top:713px;font-size:11px;color:#000;font-weight:400;text-align:right;">6200.00</div><div style="position:absolute;left:730px;top:713px;width:44px;height:13px;background:rgb(255,75,75)"></div><div class="t" style="right:556px;top:713px;font-size:11px;color:#000;font-weight:400;text-align:right;">6200.00</div><div style="position:absolute;left:543px;top:735px;width:261px;height:23px;background:#f0f0f0;border-top:1px solid #d8d8d8"></div><div style="position:absolute;left:617px;top:737px;width:1px;height:19px;background:#d7d7d7"></div><svg style="position:absolute;left:793px;top:747px;" width="10" height="10" viewBox="0 0 10 10"><rect x="8" y="0" width="2" height="2" fill="#a0a0a0"/><rect x="5" y="3" width="2" height="2" fill="#a0a0a0"/><rect x="8" y="3" width="2" height="2" fill="#a0a0a0"/><rect x="2" y="6" width="2" height="2" fill="#a0a0a0"/><rect x="5" y="6" width="2" height="2" fill="#a0a0a0"/><rect x="8" y="6" width="2" height="2" fill="#a0a0a0"/></svg><div style="position:absolute;left:830px;top:600px;width:461px;height:168px;background:linear-gradient(#bccde0 0px,#cbd9e9 16px,#d7e4f2 30px,#d7e4f2 100%);border:1px solid #555555;border-radius:5px 5px 0 0"></div><div style="position:absolute;left:831px;top:601px;width:459px;height:166px;border-top:1px solid #e6ecf6;border-left:1px solid #e6ecf6;border-right:1px solid #eef2fa;border-bottom:1px solid #eef2fa;border-radius:4px 4px 0 0"></div><svg style="position:absolute;left:840px;top:613px;shape-rendering:crispEdges" width="16" height="12" viewBox="0 0 16 12"><rect x="0" y="2" width="16" height="8" fill="#000"/><rect x="1.5" y="0" width="1.6" height="2" fill="#000"/><rect x="1.5" y="10" width="1.6" height="2" fill="#000"/><rect x="4.5" y="0" width="1.6" height="2" fill="#000"/><rect x="4.5" y="10" width="1.6" height="2" fill="#000"/><rect x="7.5" y="0" width="1.6" height="2" fill="#000"/><rect x="7.5" y="10" width="1.6" height="2" fill="#000"/><rect x="10.5" y="0" width="1.6" height="2" fill="#000"/><rect x="10.5" y="10" width="1.6" height="2" fill="#000"/><rect x="13.5" y="0" width="1.6" height="2" fill="#000"/><rect x="13.5" y="10" width="1.6" height="2" fill="#000"/></svg><div class="t" style="left:860px;top:613px;font-size:12px;color:#a0a6ac;font-weight:400;-webkit-text-stroke:0;transform-origin:0 0;transform:scaleX(0.8997);">0xDCF3</div><div class="t" style="left:912.3px;top:613px;font-size:12px;color:#a0a6ac;font-weight:400;-webkit-text-stroke:0;transform-origin:0 0;transform:scaleX(0.9556);">Idle advance Vanos retarded (1x8)</div><div style="position:absolute;left:1249px;top:610px;width:32px;height:18px;background:linear-gradient(#e8eef6,#d4dde8);border:1px solid #7a8aa0;border-radius:3px;box-shadow:inset 0 0 0 1px rgba(255,255,255,0.6)"></div><svg style="position:absolute;left:1259px;top:614px;" width="12" height="10" viewBox="0 0 12 10"><path d="M2.5 2l7 6M9.5 2l-7 6" stroke="#505860" stroke-width="4" stroke-linecap="round"/><path d="M2.5 2l7 6M9.5 2l-7 6" stroke="#f0f0f0" stroke-width="2.2" stroke-linecap="round"/></svg><div style="position:absolute;left:838px;top:631px;width:445px;height:25px;background:#f0f0f0"></div><div style="position:absolute;left:840px;top:632px;width:2px;height:20px;background:#fff"></div><div style="position:absolute;left:842px;top:632px;width:1px;height:20px;background:#a0a0a0"></div><div style="position:absolute;left:840px;top:652px;width:3px;height:1px;background:#a0a0a0"></div><svg style="position:absolute;left:851px;top:637px" width="14" height="14"><use href="#isave"/></svg><svg style="position:absolute;left:875px;top:638px" width="12" height="13"><use href="#ix"/></svg><svg style="position:absolute;left:897px;top:638px" width="15" height="13"><use href="#igraph"/></svg><svg style="position:absolute;left:920px;top:636px" width="17" height="15"><use href="#iscale"/></svg><svg style="position:absolute;left:943px;top:636px" width="25" height="15"><use href="#itri"/></svg><svg style="position:absolute;left:975px;top:637px" width="16" height="14"><use href="#igx"/></svg><svg style="position:absolute;left:998px;top:637px" width="16" height="14"><use href="#igy"/></svg><svg style="position:absolute;left:1023px;top:637px" width="12" height="13"><use href="#iga"/></svg><div style="position:absolute;left:838px;top:656px;width:445px;height:25px;background:#f0f0f0"></div><div style="position:absolute;left:840px;top:658px;width:2px;height:20px;background:#fff"></div><div style="position:absolute;left:842px;top:658px;width:1px;height:20px;background:#a0a0a0"></div><div style="position:absolute;left:840px;top:678px;width:3px;height:1px;background:#a0a0a0"></div><div class="t" style="left:852.6px;top:661px;font-size:12px;color:#000;font-weight:400;;transform-origin:0 0;transform:scaleX(0.8975);">Function:</div><div style="position:absolute;left:901px;top:658px;width:104px;height:20px;background:#fdfdfd;border:1px solid #d9d9d9;border-bottom-color:#bcbcbc"></div><div class="t" style="left:904px;top:662px;font-size:12px;color:#000;font-weight:400;;transform-origin:0 0;transform:scaleX(1.0092);">Offset (+/-)</div><svg style="position:absolute;left:991px;top:666px;" width="9" height="6" viewBox="0 0 9 6"><path d="M0.5 0.5l4 4 4-4" fill="none" stroke="#404040" stroke-width="1"/></svg><div class="t" style="left:1013.5px;top:661px;font-size:12px;color:#000;font-weight:400;;transform-origin:0 0;transform:scaleX(0.8811);">Value:</div><div style="position:absolute;left:1045px;top:658px;width:46px;height:20px;background:#fff;border-bottom:1px solid #7a7a7a"></div><div class="t" style="left:1048px;top:662px;font-size:12px;color:#000;font-weight:400;;">1.0</div><div style="position:absolute;left:1094px;top:659px;width:49px;height:19px;background:#fdfdfd;border:1px solid #d0d0d0;border-radius:3px"></div><div class="t" style="left:1099px;top:663px;font-size:12px;color:#000;font-weight:400;;transform-origin:0 0;transform:scaleX(0.9041);">Execute</div><div style="position:absolute;left:838px;top:681px;width:445px;height:56px;border-top:1px solid #a0a0a0;border-left:1px solid #a0a0a0;border-right:1px solid #fff;border-bottom:1px solid #fff"></div><div style="position:absolute;left:839px;top:682px;width:443px;height:54px;border-top:1px solid #696969;border-left:1px solid #696969;border-right:1px solid #e3e3e3;border-bottom:1px solid #e3e3e3"></div><div style="position:absolute;left:840px;top:683px;width:441px;height:52px;background:#404040"></div><div style="position:absolute;left:840px;top:683px;width:441px;height:15px;background:#f0f0f0;border:1px solid #a0a0a0;box-shadow:inset 1px 1px #fff"></div><div class="t" style="left:929.9px;top:685px;font-size:11px;color:#000;font-weight:700;-webkit-text-stroke:0;transform-origin:0 0;transform:scaleX(1.0691);">0xDCF3</div><div class="t" style="left:990.0px;top:685px;font-size:11px;color:#000;font-weight:700;-webkit-text-stroke:0;transform-origin:0 0;transform:scaleX(1.1347);">Idle advance Vanos retarded (1x8)</div><div style="position:absolute;left:840px;top:698px;width:414px;height:31px;background:#fff"></div><div style="position:absolute;left:886px;top:714px;width:368px;height:15px;background:#dcdfdf"></div><div style="position:absolute;left:840px;top:714px;width:46px;height:15px;background:#fff"></div><div style="position:absolute;left:840px;top:699px;width:45px;height:14px;background:#f0f0f0;border:1px solid #a0a0a0;box-shadow:inset 1px 1px #fff"></div><div class="t" style="left:840.0px;width:45px;top:701px;font-size:11px;color:#000;font-weight:400;text-align:center;">RPM</div><div style="position:absolute;left:886px;top:699px;width:45px;height:14px;background:#dcdcdc;border:1px solid #a0a0a0;box-shadow:inset 1px 1px #fff"></div><div class="t" style="left:886.5px;width:45px;top:701px;font-size:11px;color:#000;font-weight:400;text-align:center;">560</div><div style="position:absolute;left:932px;top:699px;width:45px;height:14px;background:#f0f0f0;border:1px solid #a0a0a0;box-shadow:inset 1px 1px #fff"></div><div class="t" style="left:932.5px;width:45px;top:701px;font-size:11px;color:#000;font-weight:400;text-align:center;">600</div><div style="position:absolute;left:978px;top:699px;width:45px;height:14px;background:#f0f0f0;border:1px solid #a0a0a0;box-shadow:inset 1px 1px #fff"></div><div class="t" style="left:978.5px;width:45px;top:701px;font-size:11px;color:#000;font-weight:400;text-align:center;">640</div><div style="position:absolute;left:1024px;top:699px;width:45px;height:14px;background:#f0f0f0;border:1px solid #a0a0a0;box-shadow:inset 1px 1px #fff"></div><div class="t" style="left:1024.5px;width:45px;top:701px;font-size:11px;color:#000;font-weight:400;text-align:center;">960</div><div style="position:absolute;left:1070px;top:699px;width:45px;height:14px;background:#f0f0f0;border:1px solid #a0a0a0;box-shadow:inset 1px 1px #fff"></div><div class="t" style="left:1070.5px;width:45px;top:701px;font-size:11px;color:#000;font-weight:400;text-align:center;">1320</div><div style="position:absolute;left:1116px;top:699px;width:45px;height:14px;background:#f0f0f0;border:1px solid #a0a0a0;box-shadow:inset 1px 1px #fff"></div><div class="t" style="left:1116.5px;width:45px;top:701px;font-size:11px;color:#000;font-weight:400;text-align:center;">1600</div><div style="position:absolute;left:1162px;top:699px;width:45px;height:14px;background:#f0f0f0;border:1px solid #a0a0a0;box-shadow:inset 1px 1px #fff"></div><div class="t" style="left:1162.5px;width:45px;top:701px;font-size:11px;color:#000;font-weight:400;text-align:center;">2480</div><div style="position:absolute;left:1208px;top:699px;width:45px;height:14px;background:#f0f0f0;border:1px solid #a0a0a0;box-shadow:inset 1px 1px #fff"></div><div class="t" style="left:1208.5px;width:45px;top:701px;font-size:11px;color:#000;font-weight:400;text-align:center;">3640</div><div style="position:absolute;left:840px;top:714px;width:45px;height:14px;background:#dcdcdc;border:1px solid #a0a0a0;box-shadow:inset 1px 1px #fff"></div><div style="position:absolute;left:886px;top:714px;width:46px;height:15px;background:rgb(206,148,148);border:1px solid #000"></div><div class="t" style="right:399px;top:715px;font-size:11px;color:#000;font-weight:400;text-align:right;">12</div><div style="position:absolute;left:933px;top:715px;width:44px;height:13px;background:rgb(255,75,75)"></div><div class="t" style="right:353px;top:715px;font-size:11px;color:#000;font-weight:400;text-align:right;">17</div><div style="position:absolute;left:979px;top:715px;width:44px;height:13px;background:rgb(245,91,91)"></div><div class="t" style="right:307px;top:715px;font-size:11px;color:#000;font-weight:400;text-align:right;">15</div><div style="position:absolute;left:1025px;top:715px;width:44px;height:13px;background:rgb(245,91,91)"></div><div class="t" style="right:261px;top:715px;font-size:11px;color:#000;font-weight:400;text-align:right;">15</div><div style="position:absolute;left:1071px;top:715px;width:44px;height:13px;background:rgb(245,91,91)"></div><div class="t" style="right:215px;top:715px;font-size:11px;color:#000;font-weight:400;text-align:right;">15</div><div style="position:absolute;left:1117px;top:715px;width:44px;height:13px;background:rgb(150,255,255)"></div><div class="t" style="right:169px;top:715px;font-size:11px;color:#000;font-weight:400;text-align:right;">-05</div><div style="position:absolute;left:1163px;top:715px;width:44px;height:13px;background:rgb(150,255,255)"></div><div class="t" style="right:123px;top:715px;font-size:11px;color:#000;font-weight:400;text-align:right;">-05</div><div style="position:absolute;left:1209px;top:715px;width:44px;height:13px;background:rgb(150,255,255)"></div><div class="t" style="right:77px;top:715px;font-size:11px;color:#000;font-weight:400;text-align:right;">-05</div><div style="position:absolute;left:838px;top:737px;width:445px;height:23px;background:#f0f0f0;border-top:1px solid #d8d8d8"></div><div style="position:absolute;left:912px;top:739px;width:1px;height:19px;background:#d7d7d7"></div><svg style="position:absolute;left:1272px;top:749px;" width="10" height="10" viewBox="0 0 10 10"><rect x="8" y="0" width="2" height="2" fill="#a0a0a0"/><rect x="5" y="3" width="2" height="2" fill="#a0a0a0"/><rect x="8" y="3" width="2" height="2" fill="#a0a0a0"/><rect x="2" y="6" width="2" height="2" fill="#a0a0a0"/><rect x="5" y="6" width="2" height="2" fill="#a0a0a0"/><rect x="8" y="6" width="2" height="2" fill="#a0a0a0"/></svg></body></html>
